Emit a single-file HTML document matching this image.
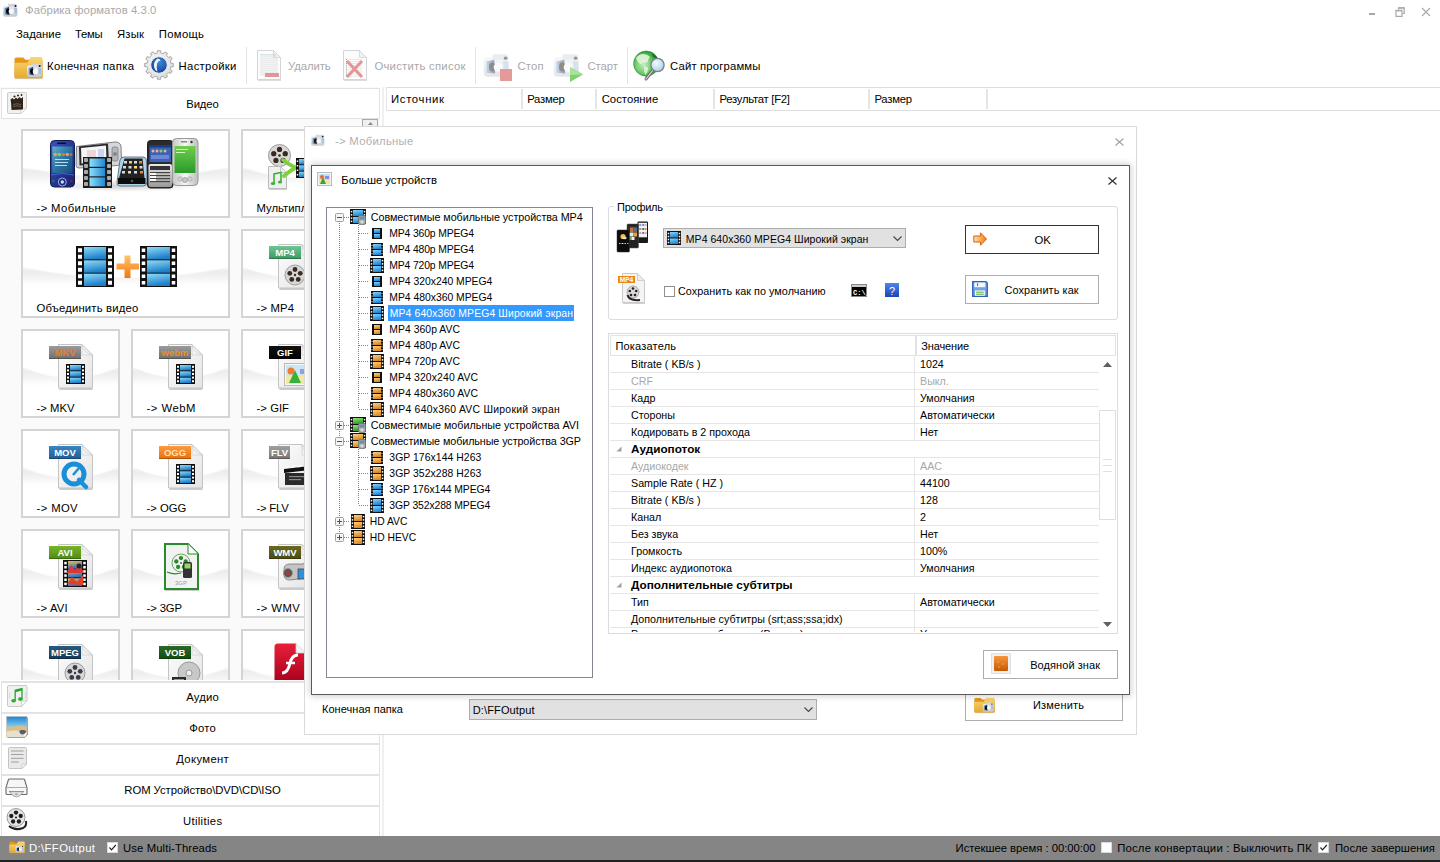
<!DOCTYPE html>
<html><head><meta charset="utf-8">
<style>
html,body{margin:0;padding:0;}
body{width:1440px;height:862px;overflow:hidden;position:relative;background:#fff;font-family:"Liberation Sans", sans-serif;}
.t{position:absolute;white-space:pre;line-height:1;}
.r{position:absolute;box-sizing:border-box;}
svg.r{overflow:visible;}
</style></head><body>
<svg class="r" style="left:2px;top:3px;" width="16" height="14" viewBox="0 0 16 14"><defs><linearGradient id="g1" x1="0" y1="0" x2="0" y2="1"><stop offset="0" stop-color="#eceef1"/><stop offset="1" stop-color="#c4c8ce"/></linearGradient><linearGradient id="g2" x1="0" y1="0" x2="1" y2="0"><stop offset="0" stop-color="#7fa6d8"/><stop offset="1" stop-color="#1c2a44"/></linearGradient></defs><g opacity="1" transform="scale(1.0,1.0)"><path d="M1 5 Q1 2.5 3.5 2.5 L13 2.5 Q15.5 2.5 15.5 5 L15.5 11.5 Q15.5 13.8 13 13.8 L3.5 13.8 Q1 13.8 1 11.5 Z" fill="url(#g1)"/><path d="M6 0.8 L13 0.8 Q15 0.8 15 2.5 L15 4 L6 4 Z" fill="#d4d6da"/><circle cx="13.5" cy="3" r="1" fill="#111"/><path d="M2.5 5 L7 4 L7.5 12 L2.5 11.5 Z" fill="url(#g2)"/><ellipse cx="5.8" cy="8.2" rx="1.8" ry="2.6" fill="#050505"/><circle cx="9.3" cy="8.3" r="2.6" fill="#f8f8f8"/><path d="M12 4.5 L15 5 L15 10.5 L12.5 10.5 Z" fill="#9dbbe0" opacity="0.9"/></g></svg><span class="t" style="left:25.00px;top:5px;font-size:11.3px;color:#a9a9a9;letter-spacing:0.076px;">Фабрика форматов 4.3.0</span><div class="r" style="left:1369px;top:13px;width:6px;height:2px;background:#a8a8a8;"></div><svg class="r" style="left:1395px;top:7px;" width="10" height="10" viewBox="0 0 10 10"><path d="M3.5 2.5 V0.8 H9.2 V6.5 H7.5" fill="none" stroke="#a8a8a8" stroke-width="1.2"/><rect x="1" y="3.4" width="6" height="6" fill="none" stroke="#a8a8a8" stroke-width="1.2"/><rect x="1" y="3" width="6" height="1.4" fill="#a8a8a8"/><rect x="3.5" y="0.3" width="6" height="1.4" fill="#a8a8a8"/></svg><svg class="r" style="left:1421px;top:7px;" width="10" height="10" viewBox="0 0 10 10"><path d="M1 1 L9 9 M9 1 L1 9" stroke="#a8a8a8" stroke-width="1.1"/></svg><span class="t" style="left:16.00px;top:29px;font-size:11.3px;color:#000;letter-spacing:0.031px;">Задание</span><span class="t" style="left:75.00px;top:29px;font-size:11.3px;color:#000;letter-spacing:-0.246px;">Темы</span><span class="t" style="left:117.00px;top:29px;font-size:11.3px;color:#000;letter-spacing:0.198px;">Язык</span><span class="t" style="left:158.75px;top:29px;font-size:11.3px;color:#000;letter-spacing:0.322px;">Помощь</span><svg class="r" style="left:14px;top:56px;" width="29" height="23" viewBox="0 0 29 23"><defs><linearGradient id="g3" x1="0" y1="0" x2="0" y2="1"><stop offset="0" stop-color="#f9d77a"/><stop offset="1" stop-color="#e7a928"/></linearGradient><linearGradient id="g4" x1="0" y1="0" x2="0" y2="1"><stop offset="0" stop-color="#e69a1a"/><stop offset="1" stop-color="#d78a10"/></linearGradient></defs><g transform="scale(1.0357142857142858,1.0454545454545454)"><path d="M0.5 3 Q0.5 1.5 2 1.5 L9 1.5 L11 3.5 L26 3.5 Q27.5 3.5 27.5 5 L27.5 20 Q27.5 21.5 26 21.5 L2 21.5 Q0.5 21.5 0.5 20 Z" fill="url(#g4)"/><path d="M0.5 8 Q0.5 6.5 2 6.5 L13 6.5 L16 1 L26 1 Q27.5 1 27.5 2.5 L27.5 20 Q27.5 21.5 26 21.5 L2 21.5 Q0.5 21.5 0.5 20 Z" fill="url(#g3)"/><rect x="1" y="21.2" width="27" height="1" fill="#c9c9c9" opacity="0.6"/></g></svg><svg class="r" style="left:25.6px;top:62.9px;" width="16.240000000000002" height="14.26" viewBox="0 0 16.240000000000002 14.26"><defs><linearGradient id="g5" x1="0" y1="0" x2="0" y2="1"><stop offset="0" stop-color="#eceef1"/><stop offset="1" stop-color="#c4c8ce"/></linearGradient><linearGradient id="g6" x1="0" y1="0" x2="1" y2="0"><stop offset="0" stop-color="#7fa6d8"/><stop offset="1" stop-color="#1c2a44"/></linearGradient></defs><g opacity="1" transform="scale(1.0150000000000001,1.0185714285714285)"><path d="M1 5 Q1 2.5 3.5 2.5 L13 2.5 Q15.5 2.5 15.5 5 L15.5 11.5 Q15.5 13.8 13 13.8 L3.5 13.8 Q1 13.8 1 11.5 Z" fill="url(#g5)"/><path d="M6 0.8 L13 0.8 Q15 0.8 15 2.5 L15 4 L6 4 Z" fill="#d4d6da"/><circle cx="13.5" cy="3" r="1" fill="#111"/><path d="M2.5 5 L7 4 L7.5 12 L2.5 11.5 Z" fill="url(#g6)"/><ellipse cx="5.8" cy="8.2" rx="1.8" ry="2.6" fill="#050505"/><circle cx="9.3" cy="8.3" r="2.6" fill="#f8f8f8"/><path d="M12 4.5 L15 5 L15 10.5 L12.5 10.5 Z" fill="#9dbbe0" opacity="0.9"/></g></svg><span class="t" style="left:47.00px;top:61px;font-size:11.3px;color:#000;letter-spacing:0.333px;">Конечная папка</span><svg class="r" style="left:144px;top:50px;" width="30" height="30" viewBox="0 0 30 30"><defs><radialGradient id="g7" cx="0.45" cy="0.4" r="0.65"><stop offset="0" stop-color="#ffffff"/><stop offset="1" stop-color="#d6d6d6"/></radialGradient><radialGradient id="g8" cx="0.55" cy="0.35" r="0.7"><stop offset="0" stop-color="#3f86d8"/><stop offset="1" stop-color="#0a3d98"/></radialGradient></defs><g transform="scale(1.0)"><path d="M26.59 11.89 L26.85 13.12 L29.32 13.49 L29.32 16.51 L26.85 16.88 L26.59 18.11 L26.20 19.30 L28.16 20.86 L26.65 23.46 L24.33 22.55 L23.49 23.49 L22.55 24.33 L23.46 26.65 L20.86 28.16 L19.30 26.20 L18.11 26.59 L16.88 26.85 L16.51 29.32 L13.49 29.32 L13.12 26.85 L11.89 26.59 L10.70 26.20 L9.14 28.16 L6.54 26.65 L7.45 24.33 L6.51 23.49 L5.67 22.55 L3.35 23.46 L1.84 20.86 L3.80 19.30 L3.41 18.11 L3.15 16.88 L0.68 16.51 L0.68 13.49 L3.15 13.12 L3.41 11.89 L3.80 10.70 L1.84 9.14 L3.35 6.54 L5.67 7.45 L6.51 6.51 L7.45 5.67 L6.54 3.35 L9.14 1.84 L10.70 3.80 L11.89 3.41 L13.12 3.15 L13.49 0.68 L16.51 0.68 L16.88 3.15 L18.11 3.41 L19.30 3.80 L20.86 1.84 L23.46 3.35 L22.55 5.67 L23.49 6.51 L24.33 7.45 L26.65 6.54 L28.16 9.14 L26.20 10.70 Z" fill="url(#g7)" stroke="#8c8c8c" stroke-width="0.7" stroke-linejoin="round"/><circle cx="15" cy="15" r="8.3" fill="url(#g8)" stroke="#f2ede6" stroke-width="1"/><path d="M13.2 8.8 Q9.2 12 10.2 17.5 Q11 20.6 13.4 21.8 Q12 17.2 13.2 13.2 Q14.2 10.8 16.6 10.6 Q16 8.4 13.2 8.8 Z" fill="#eef2f6"/></g></svg><span class="t" style="left:178.60px;top:61px;font-size:11.3px;color:#000;letter-spacing:0.299px;">Настройки</span><div class="r" style="left:246px;top:47px;width:1px;height:37px;background:#e3e3e3;"></div><svg class="r" style="left:257px;top:50px;" width="24" height="31" viewBox="0 0 24 31"><g opacity="0.75"><rect x="1" y="29.5" width="23" height="1.5" fill="#bdbdbd" opacity="0.7"/><path d="M0.5 0.5 L16.5 0.5 L23.5 7.5 L23.5 29.5 L0.5 29.5 Z" fill="#fbfbfb" stroke="#c8c8c8" stroke-width="1"/><path d="M16.5 0.5 L16.5 7.5 L23.5 7.5 Z" fill="#ececec" stroke="#c8c8c8" stroke-width="0.8"/></g><g opacity="0.8"><rect x="3" y="4.5" width="16" height="0.8" fill="#9cc3d6"/><rect x="3" y="6.5" width="16" height="0.8" fill="#d5d5d5"/><rect x="3" y="8.5" width="18" height="0.8" fill="#d5d5d5"/><rect x="3" y="10.5" width="18" height="0.8" fill="#d5d5d5"/><rect x="3" y="12.5" width="18" height="0.8" fill="#d5d5d5"/><rect x="3" y="14.5" width="18" height="0.8" fill="#d5d5d5"/><rect x="3" y="16.5" width="18" height="0.8" fill="#d5d5d5"/><rect x="3" y="18.5" width="18" height="0.8" fill="#d5d5d5"/><rect x="3" y="20.5" width="18" height="0.8" fill="#d5d5d5"/><rect x="3" y="22.5" width="18" height="0.8" fill="#d5d5d5"/><rect x="3" y="24.5" width="18" height="0.8" fill="#d5d5d5"/></g><rect x="8" y="23" width="14" height="4" fill="#e08d8d" opacity="0.9"/></svg><span class="t" style="left:288.00px;top:61px;font-size:11.3px;color:#a9a9a9;letter-spacing:-0.073px;">Удалить</span><svg class="r" style="left:343px;top:50px;" width="24" height="31" viewBox="0 0 24 31"><g opacity="0.75"><rect x="1" y="29.5" width="23" height="1.5" fill="#bdbdbd" opacity="0.7"/><path d="M0.5 0.5 L16.5 0.5 L23.5 7.5 L23.5 29.5 L0.5 29.5 Z" fill="#fbfbfb" stroke="#c8c8c8" stroke-width="1"/><path d="M16.5 0.5 L16.5 7.5 L23.5 7.5 Z" fill="#ececec" stroke="#c8c8c8" stroke-width="0.8"/></g><g opacity="0.6"><rect x="3" y="9.0" width="1" height="1" fill="#555"/><rect x="5" y="9.0" width="14" height="0.7" fill="#d0d0d0"/><rect x="3" y="11.1" width="1" height="1" fill="#555"/><rect x="5" y="11.1" width="14" height="0.7" fill="#d0d0d0"/><rect x="3" y="13.2" width="1" height="1" fill="#555"/><rect x="5" y="13.2" width="14" height="0.7" fill="#d0d0d0"/><rect x="3" y="15.3" width="1" height="1" fill="#555"/><rect x="5" y="15.3" width="14" height="0.7" fill="#d0d0d0"/><rect x="3" y="17.4" width="1" height="1" fill="#555"/><rect x="5" y="17.4" width="14" height="0.7" fill="#d0d0d0"/><rect x="3" y="19.5" width="1" height="1" fill="#555"/><rect x="5" y="19.5" width="14" height="0.7" fill="#d0d0d0"/><rect x="3" y="21.6" width="1" height="1" fill="#555"/><rect x="5" y="21.6" width="14" height="0.7" fill="#d0d0d0"/><rect x="3" y="23.7" width="1" height="1" fill="#555"/><rect x="5" y="23.7" width="14" height="0.7" fill="#d0d0d0"/><rect x="3" y="25.8" width="1" height="1" fill="#555"/><rect x="5" y="25.8" width="14" height="0.7" fill="#d0d0d0"/></g><path d="M4 11 L19 27 M19 11 L4 27" stroke="#e38b8b" stroke-width="3" opacity="0.9"/></svg><span class="t" style="left:374.40px;top:61px;font-size:11.3px;color:#a9a9a9;letter-spacing:0.264px;">Очистить список</span><div class="r" style="left:475px;top:47px;width:1px;height:37px;background:#e3e3e3;"></div><svg class="r" style="left:482px;top:53px;" width="28" height="24" viewBox="0 0 28 24"><defs><linearGradient id="g9" x1="0" y1="0" x2="0" y2="1"><stop offset="0" stop-color="#eceef1"/><stop offset="1" stop-color="#c4c8ce"/></linearGradient><linearGradient id="g10" x1="0" y1="0" x2="1" y2="0"><stop offset="0" stop-color="#7fa6d8"/><stop offset="1" stop-color="#1c2a44"/></linearGradient></defs><g opacity="0.45" transform="scale(1.75,1.7142857142857142)"><path d="M1 5 Q1 2.5 3.5 2.5 L13 2.5 Q15.5 2.5 15.5 5 L15.5 11.5 Q15.5 13.8 13 13.8 L3.5 13.8 Q1 13.8 1 11.5 Z" fill="url(#g9)"/><path d="M6 0.8 L13 0.8 Q15 0.8 15 2.5 L15 4 L6 4 Z" fill="#d4d6da"/><circle cx="13.5" cy="3" r="1" fill="#111"/><path d="M2.5 5 L7 4 L7.5 12 L2.5 11.5 Z" fill="url(#g10)"/><ellipse cx="5.8" cy="8.2" rx="1.8" ry="2.6" fill="#050505"/><circle cx="9.3" cy="8.3" r="2.6" fill="#f8f8f8"/><path d="M12 4.5 L15 5 L15 10.5 L12.5 10.5 Z" fill="#9dbbe0" opacity="0.9"/></g></svg><div class="r" style="left:500px;top:69px;width:12px;height:12px;background:#e59a9a;"></div><span class="t" style="left:517.50px;top:61px;font-size:11.3px;color:#a9a9a9;letter-spacing:0.130px;">Стоп</span><svg class="r" style="left:552px;top:53px;" width="28" height="24" viewBox="0 0 28 24"><defs><linearGradient id="g11" x1="0" y1="0" x2="0" y2="1"><stop offset="0" stop-color="#eceef1"/><stop offset="1" stop-color="#c4c8ce"/></linearGradient><linearGradient id="g12" x1="0" y1="0" x2="1" y2="0"><stop offset="0" stop-color="#7fa6d8"/><stop offset="1" stop-color="#1c2a44"/></linearGradient></defs><g opacity="0.45" transform="scale(1.75,1.7142857142857142)"><path d="M1 5 Q1 2.5 3.5 2.5 L13 2.5 Q15.5 2.5 15.5 5 L15.5 11.5 Q15.5 13.8 13 13.8 L3.5 13.8 Q1 13.8 1 11.5 Z" fill="url(#g11)"/><path d="M6 0.8 L13 0.8 Q15 0.8 15 2.5 L15 4 L6 4 Z" fill="#d4d6da"/><circle cx="13.5" cy="3" r="1" fill="#111"/><path d="M2.5 5 L7 4 L7.5 12 L2.5 11.5 Z" fill="url(#g12)"/><ellipse cx="5.8" cy="8.2" rx="1.8" ry="2.6" fill="#050505"/><circle cx="9.3" cy="8.3" r="2.6" fill="#f8f8f8"/><path d="M12 4.5 L15 5 L15 10.5 L12.5 10.5 Z" fill="#9dbbe0" opacity="0.9"/></g></svg><svg class="r" style="left:570px;top:67px;" width="13" height="15" viewBox="0 0 13 15"><path d="M0 0 L13 7.5 L0 15 Z" fill="#7fcf6f"/><path d="M0 0 L13 7.5 L0 8 Z" fill="#a9e29a"/></svg><span class="t" style="left:587.50px;top:61px;font-size:11.3px;color:#a9a9a9;letter-spacing:-0.076px;">Старт</span><div class="r" style="left:627px;top:47px;width:1px;height:37px;background:#e3e3e3;"></div><svg class="r" style="left:633px;top:50px;" width="32" height="31" viewBox="0 0 32 31"><defs><radialGradient id="g13" cx="0.4" cy="0.55" r="0.7"><stop offset="0" stop-color="#c9f0c4"/><stop offset="0.55" stop-color="#5cc25a"/><stop offset="1" stop-color="#0d7a1a"/></radialGradient><radialGradient id="g14" cx="0.4" cy="0.35" r="0.75"><stop offset="0" stop-color="#f2faff"/><stop offset="1" stop-color="#a4cde8"/></radialGradient></defs><circle cx="13.2" cy="13.6" r="12.6" fill="url(#g13)" stroke="#1f8a2a" stroke-width="0.6"/><path d="M3 8 Q6 3.5 11 4 Q15 4.5 17 7 Q15 9 14.5 12 Q12 13.5 10 12.5 Q8 15 6 13 Q4 11.5 3 8 Z" fill="#e6f7e2" opacity="0.85"/><path d="M11 16.5 Q14 16 15.5 18 Q15 22 12.5 25 Q10.5 22.5 11 19 Z" fill="#e6f7e2" opacity="0.8"/><path d="M19 3.5 Q22.5 5 24 8.5 Q21.5 8.5 19.5 6.5 Z" fill="#0a5a10" opacity="0.6"/><line x1="20.5" y1="19.5" x2="13" y2="29" stroke="#6a6a6a" stroke-width="3" stroke-linecap="round"/><line x1="20.5" y1="19.5" x2="13" y2="29" stroke="#d8d8d8" stroke-width="1.2" stroke-linecap="round"/><circle cx="24.5" cy="15" r="6.6" fill="url(#g14)" stroke="#7a7f84" stroke-width="1.3"/></svg><span class="t" style="left:670.00px;top:61px;font-size:11.3px;color:#000;letter-spacing:0.168px;">Сайт программы</span><div class="r" style="left:0px;top:87px;width:380px;height:749px;background:#fafafa;"></div><div class="r" style="left:1px;top:88px;width:379px;height:31px;background:#fff;border:1px solid #e2e2e2;border-right:1px solid #e2e2e2;"></div><svg class="r" style="left:7px;top:92px;" width="20" height="22" viewBox="0 0 20 22"><path d="M1.5 0.5 L18.5 0.5 Q19.5 0.5 19.5 1.5 L19.5 16 L14 21.5 L1.5 21.5 Q0.5 21.5 0.5 20.5 L0.5 1.5 Q0.5 0.5 1.5 0.5 Z" fill="#f2f0ee" stroke="#d2ccc6" stroke-width="1"/><path d="M19.5 16 L15 16 Q14 16 14 17 L14 21.5 Z" fill="#fdfdfd" stroke="#d2ccc6" stroke-width="0.8"/><path d="M4 10 L16 8.5 L16 17.5 L4.5 18 Z" fill="#2e241c"/><path d="M3.5 7.5 L5.5 6 L7 7.5 L9 5.5 L10.5 7 L12.5 5 L14 6.5 L16 5 L16 9 L4 10.5 Z" fill="#2e241c"/><circle cx="7.5" cy="4.5" r="1.1" fill="#2e241c"/><circle cx="11" cy="3.6" r="1" fill="#2e241c"/><circle cx="14.5" cy="3" r="0.9" fill="#2e241c"/><path d="M6 12.5 Q10 11 14 12.5 M6 14.5 Q10 13 14 14.5" stroke="#7a6d62" stroke-width="0.8" fill="none"/></svg><span class="t" style="left:-97.55px;width:600px;text-align:center;top:99px;font-size:11.3px;color:#000;letter-spacing:-0.104px;">Видео</span><div class="r" style="left:362px;top:119px;width:16px;height:8px;background:#f0f0f0;border:1px solid #a8a8a8;border-bottom:none;"></div><svg class="r" style="left:368px;top:122px;" width="5" height="3" viewBox="0 0 5 3"><path d="M0 3 L2.5 0 L5 3 Z" fill="#888"/></svg><div class="r" style="left:21px;top:129px;width:209px;height:89px;border:2px solid #d4d4d4;background:radial-gradient(80% 56% at 50% 0%, #fff 96%, rgba(255,255,255,0) 100%),linear-gradient(#fff 0%,#fff 41%,#ececec 47%,#f3f3f3 55%,#fcfcfc 61%,#fff 66%);"></div><div class="r" style="left:241px;top:129px;width:120px;height:89px;border:2px solid #d4d4d4;background:radial-gradient(80% 56% at 50% 0%, #fff 96%, rgba(255,255,255,0) 100%),linear-gradient(#fff 0%,#fff 41%,#ececec 47%,#f3f3f3 55%,#fcfcfc 61%,#fff 66%);"></div><div class="r" style="left:21px;top:229px;width:209px;height:89px;border:2px solid #d4d4d4;background:radial-gradient(80% 56% at 50% 0%, #fff 96%, rgba(255,255,255,0) 100%),linear-gradient(#fff 0%,#fff 41%,#ececec 47%,#f3f3f3 55%,#fcfcfc 61%,#fff 66%);"></div><div class="r" style="left:241px;top:229px;width:120px;height:89px;border:2px solid #d4d4d4;background:radial-gradient(80% 56% at 50% 0%, #fff 96%, rgba(255,255,255,0) 100%),linear-gradient(#fff 0%,#fff 41%,#ececec 47%,#f3f3f3 55%,#fcfcfc 61%,#fff 66%);"></div><div class="r" style="left:21px;top:329px;width:99px;height:89px;border:2px solid #d4d4d4;background:radial-gradient(80% 56% at 50% 0%, #fff 96%, rgba(255,255,255,0) 100%),linear-gradient(#fff 0%,#fff 41%,#ececec 47%,#f3f3f3 55%,#fcfcfc 61%,#fff 66%);"></div><div class="r" style="left:131px;top:329px;width:99px;height:89px;border:2px solid #d4d4d4;background:radial-gradient(80% 56% at 50% 0%, #fff 96%, rgba(255,255,255,0) 100%),linear-gradient(#fff 0%,#fff 41%,#ececec 47%,#f3f3f3 55%,#fcfcfc 61%,#fff 66%);"></div><div class="r" style="left:241px;top:329px;width:99px;height:89px;border:2px solid #d4d4d4;background:radial-gradient(80% 56% at 50% 0%, #fff 96%, rgba(255,255,255,0) 100%),linear-gradient(#fff 0%,#fff 41%,#ececec 47%,#f3f3f3 55%,#fcfcfc 61%,#fff 66%);"></div><div class="r" style="left:21px;top:429px;width:99px;height:89px;border:2px solid #d4d4d4;background:radial-gradient(80% 56% at 50% 0%, #fff 96%, rgba(255,255,255,0) 100%),linear-gradient(#fff 0%,#fff 41%,#ececec 47%,#f3f3f3 55%,#fcfcfc 61%,#fff 66%);"></div><div class="r" style="left:131px;top:429px;width:99px;height:89px;border:2px solid #d4d4d4;background:radial-gradient(80% 56% at 50% 0%, #fff 96%, rgba(255,255,255,0) 100%),linear-gradient(#fff 0%,#fff 41%,#ececec 47%,#f3f3f3 55%,#fcfcfc 61%,#fff 66%);"></div><div class="r" style="left:241px;top:429px;width:99px;height:89px;border:2px solid #d4d4d4;background:radial-gradient(80% 56% at 50% 0%, #fff 96%, rgba(255,255,255,0) 100%),linear-gradient(#fff 0%,#fff 41%,#ececec 47%,#f3f3f3 55%,#fcfcfc 61%,#fff 66%);"></div><div class="r" style="left:21px;top:529px;width:99px;height:89px;border:2px solid #d4d4d4;background:radial-gradient(80% 56% at 50% 0%, #fff 96%, rgba(255,255,255,0) 100%),linear-gradient(#fff 0%,#fff 41%,#ececec 47%,#f3f3f3 55%,#fcfcfc 61%,#fff 66%);"></div><div class="r" style="left:131px;top:529px;width:99px;height:89px;border:2px solid #d4d4d4;background:radial-gradient(80% 56% at 50% 0%, #fff 96%, rgba(255,255,255,0) 100%),linear-gradient(#fff 0%,#fff 41%,#ececec 47%,#f3f3f3 55%,#fcfcfc 61%,#fff 66%);"></div><div class="r" style="left:241px;top:529px;width:99px;height:89px;border:2px solid #d4d4d4;background:radial-gradient(80% 56% at 50% 0%, #fff 96%, rgba(255,255,255,0) 100%),linear-gradient(#fff 0%,#fff 41%,#ececec 47%,#f3f3f3 55%,#fcfcfc 61%,#fff 66%);"></div><div class="r" style="left:21px;top:629px;width:99px;height:89px;border:2px solid #d4d4d4;background:radial-gradient(80% 56% at 50% 0%, #fff 96%, rgba(255,255,255,0) 100%),linear-gradient(#fff 0%,#fff 41%,#ececec 47%,#f3f3f3 55%,#fcfcfc 61%,#fff 66%);"></div><div class="r" style="left:131px;top:629px;width:99px;height:89px;border:2px solid #d4d4d4;background:radial-gradient(80% 56% at 50% 0%, #fff 96%, rgba(255,255,255,0) 100%),linear-gradient(#fff 0%,#fff 41%,#ececec 47%,#f3f3f3 55%,#fcfcfc 61%,#fff 66%);"></div><div class="r" style="left:241px;top:629px;width:99px;height:89px;border:2px solid #d4d4d4;background:radial-gradient(80% 56% at 50% 0%, #fff 96%, rgba(255,255,255,0) 100%),linear-gradient(#fff 0%,#fff 41%,#ececec 47%,#f3f3f3 55%,#fcfcfc 61%,#fff 66%);"></div><div class="r" style="left:48px;top:180px;width:152px;height:12px;background:radial-gradient(ellipse at center, rgba(0,0,0,0.18), rgba(0,0,0,0) 70%);"></div><svg class="r" style="left:75px;top:141px;" width="47" height="28" viewBox="0 0 47 28"><path d="M1.5 5.5 L40 1 Q45 0.8 46 5 L46.5 20 Q46.5 24 42 24.5 L4 27 Q1 27.2 1 24 Z" fill="#d4d6da" stroke="#7d8086" stroke-width="1"/><path d="M4 5.5 L33 2.5 L34 22 L4.5 24.5 Z" fill="#2a2a2a"/><path d="M6 7 L31 4.5 L31.5 20.5 L6.5 22.5 Z" fill="#f4f5f8"/><rect x="12" y="9" width="9" height="9" fill="#e8c0c0" opacity="0.6"/><rect x="23" y="8" width="6" height="9" fill="#b8c8e8" opacity="0.7"/><rect x="37" y="6" width="6" height="14" rx="2" fill="#b4b7bc" stroke="#666" stroke-width="0.6"/><circle cx="40" cy="13" r="2" fill="#888"/></svg><svg class="r" style="left:50px;top:140px;" width="26" height="49" viewBox="0 0 26 49"><defs><linearGradient id="g15" x1="0" y1="0" x2="1" y2="1"><stop offset="0" stop-color="#3a50c0"/><stop offset="1" stop-color="#17206a"/></linearGradient><linearGradient id="g16" x1="0" y1="0" x2="1" y2="1"><stop offset="0" stop-color="#5fb0d0"/><stop offset="0.5" stop-color="#2a74a0"/><stop offset="1" stop-color="#1a4f80"/></linearGradient></defs><rect x="0.5" y="0.5" width="24" height="46.5" rx="4" fill="url(#g15)" stroke="#141a50" stroke-width="1"/><rect x="7" y="2.5" width="9" height="1.5" rx="0.7" fill="#0c1030"/><rect x="2.3" y="6.5" width="20.2" height="26.5" fill="url(#g16)"/><g><circle cx="5.3" cy="14.5" r="1.8" fill="#e0a070"/><circle cx="9.3" cy="14.5" r="1.8" fill="#7fd05a"/><circle cx="13.3" cy="14.5" r="1.8" fill="#c08060"/><circle cx="17.3" cy="14.5" r="1.8" fill="#d0a080"/><circle cx="21" cy="14.5" r="1.5" fill="#e06050"/></g><rect x="5" y="19" width="14" height="0.9" fill="#cfe8f2"/><rect x="5" y="22" width="13" height="0.9" fill="#cfe8f2"/><rect x="5" y="25" width="12" height="0.9" fill="#cfe8f2"/><path d="M1 35 Q12.5 32 24 35" stroke="#4a60d0" stroke-width="1" fill="none"/><circle cx="12.3" cy="42" r="4" fill="#1e2c7a" stroke="#9aacf0" stroke-width="1"/><circle cx="12.3" cy="42" r="1.7" fill="#d0d8ff"/><rect x="2.5" y="40" width="2" height="2" fill="#2a8a2a"/><rect x="20.5" y="40" width="2" height="2" fill="#a02020"/></svg><svg class="r" style="left:83px;top:157px;" width="29" height="31" viewBox="0 0 29 31"><rect x="0" y="0" width="29" height="31" fill="#1c1c1c"/><g fill="#a8a8a8"><rect x="1" y="1" width="4" height="4" rx="1"/><rect x="1" y="7" width="4" height="4" rx="1"/><rect x="1" y="13" width="4" height="4" rx="1"/><rect x="1" y="19" width="4" height="4" rx="1"/><rect x="1" y="25" width="4" height="4" rx="1"/><rect x="24" y="1" width="4" height="4" rx="1"/><rect x="24" y="7" width="4" height="4" rx="1"/><rect x="24" y="13" width="4" height="4" rx="1"/><rect x="24" y="19" width="4" height="4" rx="1"/><rect x="24" y="25" width="4" height="4" rx="1"/></g><defs><linearGradient id="fmob" x1="0" y1="0" x2="1" y2="0"><stop offset="0" stop-color="#8ee0fa"/><stop offset="1" stop-color="#2288d0"/></linearGradient></defs><rect x="6.5" y="1.5" width="15.5" height="8.3" fill="url(#fmob)"/><rect x="6.5" y="11" width="15.5" height="8.3" fill="url(#fmob)"/><rect x="6.5" y="20.5" width="15.5" height="8.8" fill="url(#fmob)"/></svg><svg class="r" style="left:116px;top:156px;" width="32" height="31" viewBox="0 0 32 31"><path d="M8 1 L27 1 Q30 1 30.5 4 L31 26 Q31 30 27 30 L4 30 Q0.5 30 1 26 L4 4 Q5 1 8 1 Z" fill="#a8d4ec" stroke="#556" stroke-width="0.8"/><path d="M8.5 2.5 L26.5 2.5 L28.5 22 L3 22 Z" fill="#222"/><g fill="#d9d9d9"><rect x="8" y="5" width="3" height="2.5"/><rect x="13" y="5" width="3" height="2.5" fill="#f5d06a"/><rect x="18" y="5" width="3" height="2.5"/><rect x="23" y="5" width="3" height="2.5" fill="#e8883a"/><rect x="7" y="10" width="3" height="2.5"/><rect x="12.5" y="10" width="3" height="2.5"/><rect x="18" y="10" width="3" height="2.5" fill="#f0e080"/><rect x="23.5" y="10" width="3" height="2.5"/><rect x="6" y="15" width="3" height="2.5"/><rect x="12" y="15" width="3" height="2.5"/><rect x="18" y="15" width="3" height="2.5"/><rect x="24" y="15" width="3" height="2.5" fill="#e8883a"/></g><rect x="2" y="22" width="27.5" height="6" fill="#0c0c0c"/><circle cx="16" cy="25" r="1.3" fill="#555"/></svg><svg class="r" style="left:147px;top:140px;" width="27" height="49" viewBox="0 0 27 49"><defs><linearGradient id="g17" x1="0" y1="0" x2="0" y2="1"><stop offset="0" stop-color="#e8e8e8"/><stop offset="1" stop-color="#9a9a9a"/></linearGradient></defs><rect x="0.5" y="0.5" width="25.5" height="47.5" rx="3" fill="#2a2a2a" stroke="#222" stroke-width="1"/><rect x="2.5" y="5" width="21.5" height="17" fill="#3b63b8"/><rect x="2.5" y="5" width="21.5" height="2.5" fill="#1d3b80"/><g fill="#f0b080"><circle cx="6" cy="11" r="1.5"/><circle cx="10" cy="11" r="1.5"/><circle cx="14" cy="11" r="1.5" fill="#80d060"/><circle cx="18" cy="11" r="1.5"/></g><rect x="4" y="15" width="18" height="4" fill="#6a8ad8"/><rect x="1.5" y="24" width="23.5" height="23" rx="2" fill="url(#g17)"/><rect x="3" y="26" width="20" height="4" fill="#333"/><g fill="#444"><rect x="3" y="32" width="20" height="1.2"/><rect x="3" y="35" width="20" height="1.2"/><rect x="3" y="38" width="20" height="1.2"/><rect x="3" y="41" width="20" height="1.2"/></g><g fill="#fafafa"><rect x="3" y="33" width="6" height="2"/><rect x="3" y="36" width="6" height="2"/><rect x="3" y="39" width="6" height="2"/></g></svg><svg class="r" style="left:172px;top:138px;" width="27" height="49" viewBox="0 0 27 49"><defs><linearGradient id="g18" x1="0" y1="0" x2="1" y2="0"><stop offset="0" stop-color="#c6c6c6"/><stop offset="0.5" stop-color="#f6f6f6"/><stop offset="1" stop-color="#bdbdbd"/></linearGradient><linearGradient id="g19" x1="0" y1="0" x2="0" y2="1"><stop offset="0" stop-color="#6ecf4a"/><stop offset="1" stop-color="#2a9a2a"/></linearGradient></defs><rect x="0.5" y="0.5" width="25.5" height="47" rx="4" fill="url(#g18)" stroke="#9a9a9a" stroke-width="1"/><rect x="9" y="3" width="6" height="1.5" fill="#888"/><circle cx="19.5" cy="4" r="1.2" fill="#333"/><rect x="2.5" y="8" width="21" height="27" fill="url(#g19)"/><rect x="4" y="11" width="12" height="1" fill="#d8f2c8"/><rect x="4" y="14" width="9" height="1" fill="#d8f2c8"/><circle cx="8" cy="41" r="2.2" fill="#d4d4d4" stroke="#999" stroke-width="0.6"/><circle cx="18" cy="41" r="2.2" fill="#d4d4d4" stroke="#999" stroke-width="0.6"/><circle cx="13" cy="42" r="2.5" fill="#c8c8c8" stroke="#888" stroke-width="0.6"/></svg><svg class="r" style="left:76px;top:246px;" width="38" height="41" viewBox="0 0 38 41"><defs><linearGradient id="g20" x1="0" y1="0" x2="0.3" y2="1"><stop offset="0" stop-color="#8fdcf8"/><stop offset="1" stop-color="#1d7fc9"/></linearGradient></defs><g opacity="1"><rect x="0" y="0" width="38" height="41" fill="#111"/><rect x="8" y="1.00" width="22" height="12.33" fill="url(#g20)"/><rect x="8" y="14.33" width="22" height="12.33" fill="url(#g20)"/><rect x="8" y="27.67" width="22" height="12.33" fill="url(#g20)"/><rect x="2.00" y="2.25" width="4.00" height="4.00" fill="#fff"/><rect x="32.00" y="2.25" width="4.00" height="4.00" fill="#fff"/><rect x="2.00" y="8.75" width="4.00" height="4.00" fill="#fff"/><rect x="32.00" y="8.75" width="4.00" height="4.00" fill="#fff"/><rect x="2.00" y="15.25" width="4.00" height="4.00" fill="#fff"/><rect x="32.00" y="15.25" width="4.00" height="4.00" fill="#fff"/><rect x="2.00" y="21.75" width="4.00" height="4.00" fill="#fff"/><rect x="32.00" y="21.75" width="4.00" height="4.00" fill="#fff"/><rect x="2.00" y="28.25" width="4.00" height="4.00" fill="#fff"/><rect x="32.00" y="28.25" width="4.00" height="4.00" fill="#fff"/><rect x="2.00" y="34.75" width="4.00" height="4.00" fill="#fff"/><rect x="32.00" y="34.75" width="4.00" height="4.00" fill="#fff"/></g></svg><svg class="r" style="left:140px;top:246px;" width="37" height="41" viewBox="0 0 37 41"><defs><linearGradient id="g21" x1="0" y1="0" x2="0.3" y2="1"><stop offset="0" stop-color="#8fdcf8"/><stop offset="1" stop-color="#1d7fc9"/></linearGradient></defs><g opacity="1"><rect x="0" y="0" width="37" height="41" fill="#111"/><rect x="7" y="1.00" width="23" height="12.33" fill="url(#g21)"/><rect x="7" y="14.33" width="23" height="12.33" fill="url(#g21)"/><rect x="7" y="27.67" width="23" height="12.33" fill="url(#g21)"/><rect x="1.75" y="2.50" width="3.50" height="3.50" fill="#fff"/><rect x="31.75" y="2.50" width="3.50" height="3.50" fill="#fff"/><rect x="1.75" y="9.00" width="3.50" height="3.50" fill="#fff"/><rect x="31.75" y="9.00" width="3.50" height="3.50" fill="#fff"/><rect x="1.75" y="15.50" width="3.50" height="3.50" fill="#fff"/><rect x="31.75" y="15.50" width="3.50" height="3.50" fill="#fff"/><rect x="1.75" y="22.00" width="3.50" height="3.50" fill="#fff"/><rect x="31.75" y="22.00" width="3.50" height="3.50" fill="#fff"/><rect x="1.75" y="28.50" width="3.50" height="3.50" fill="#fff"/><rect x="31.75" y="28.50" width="3.50" height="3.50" fill="#fff"/><rect x="1.75" y="35.00" width="3.50" height="3.50" fill="#fff"/><rect x="31.75" y="35.00" width="3.50" height="3.50" fill="#fff"/></g></svg><svg class="r" style="left:116px;top:255px;" width="24" height="24" viewBox="0 0 24 24"><defs><linearGradient id="g22" x1="0" y1="0" x2="0" y2="1"><stop offset="0" stop-color="#ffc56a"/><stop offset="1" stop-color="#f07810"/></linearGradient></defs><path d="M8.5 0.5 H14.5 V8.5 H23 V14.5 H14.5 V23 H8.5 V14.5 H0.5 V8.5 H8.5 Z" fill="url(#g22)"/></svg><svg class="r" style="left:268px;top:144px;" width="24" height="23" viewBox="0 0 24 23"><circle cx="11.5" cy="11.5" r="11" fill="#d8d8d8" stroke="#8f8f8f" stroke-width="0.88"/><circle cx="11.50" cy="5.45" r="2.64" fill="#3a2a20"/><circle cx="17.25" cy="9.63" r="2.64" fill="#3a2a20"/><circle cx="15.06" cy="16.39" r="2.64" fill="#3a2a20"/><circle cx="7.94" cy="16.39" r="2.64" fill="#3a2a20"/><circle cx="5.75" cy="9.63" r="2.64" fill="#3a2a20"/><circle cx="11.5" cy="11.5" r="1.32" fill="#3a2a20"/></svg><svg class="r" style="left:268px;top:166px;" width="19" height="24" viewBox="0 0 19 24"><g opacity="1"><rect x="1" y="22.5" width="18" height="1.5" fill="#bdbdbd" opacity="0.7"/><path d="M0.5 0.5 L12.5 0.5 L18.5 6.5 L18.5 22.5 L0.5 22.5 Z" fill="#f0f0f0" stroke="#bbb" stroke-width="1"/><path d="M12.5 0.5 L12.5 6.5 L18.5 6.5 Z" fill="#ececec" stroke="#bbb" stroke-width="0.8"/></g><path d="M6 17 L6 8 L13 6.5 L13 15" stroke="#3cb43c" stroke-width="1.6" fill="none"/><ellipse cx="5" cy="17.5" rx="2.2" ry="1.6" fill="#3cb43c"/><ellipse cx="12" cy="16" rx="2.2" ry="1.6" fill="#3cb43c"/></svg><svg class="r" style="left:282px;top:158px;" width="16" height="20" viewBox="0 0 16 20"><path d="M1 2 Q9 8 14 9.5 Q9 12 2 18" stroke="#7fd03a" stroke-width="4" fill="none" stroke-linecap="round"/></svg><svg class="r" style="left:296px;top:158px;" width="14" height="20" viewBox="0 0 14 20"><defs><linearGradient id="g23" x1="0" y1="0" x2="0.3" y2="1"><stop offset="0" stop-color="#8fdcf8"/><stop offset="1" stop-color="#1d7fc9"/></linearGradient></defs><g opacity="1"><rect x="0" y="0" width="14" height="20" fill="#111"/><rect x="3" y="1.00" width="8" height="5.33" fill="url(#g23)"/><rect x="3" y="7.33" width="8" height="5.33" fill="url(#g23)"/><rect x="3" y="13.67" width="8" height="5.33" fill="url(#g23)"/><rect x="0.75" y="2.50" width="1.50" height="1.50" fill="#fff"/><rect x="11.75" y="2.50" width="1.50" height="1.50" fill="#fff"/><rect x="0.75" y="7.00" width="1.50" height="1.50" fill="#fff"/><rect x="11.75" y="7.00" width="1.50" height="1.50" fill="#fff"/><rect x="0.75" y="11.50" width="1.50" height="1.50" fill="#fff"/><rect x="11.75" y="11.50" width="1.50" height="1.50" fill="#fff"/><rect x="0.75" y="16.00" width="1.50" height="1.50" fill="#fff"/><rect x="11.75" y="16.00" width="1.50" height="1.50" fill="#fff"/></g></svg><svg class="r" style="left:278px;top:244px;" width="35" height="46" viewBox="0 0 35 46"><defs><linearGradient id="g24" x1="0" y1="0" x2="1" y2="1"><stop offset="0" stop-color="#fdfdfd"/><stop offset="1" stop-color="#e4e4e4"/></linearGradient></defs><rect x="1.5" y="44" width="33" height="2" fill="#9a9a9a" opacity="0.5"/><path d="M0.5 0.5 L24 0.5 L34.5 11 L34.5 44 L0.5 44 Z" fill="url(#g24)" stroke="#c4c4c4" stroke-width="1"/><path d="M24 0.5 Q25 9 34.5 11 L24 11 Z" fill="#f4f4f4" stroke="#c9c9c9" stroke-width="0.6"/></svg><svg class="r" style="left:284px;top:264px;" width="22" height="22" viewBox="0 0 22 22"><circle cx="11" cy="11" r="10" fill="#d6d6d6" stroke="#8f8f8f" stroke-width="0.80"/><circle cx="11.00" cy="5.50" r="2.40" fill="#3a2a20"/><circle cx="16.23" cy="9.30" r="2.40" fill="#3a2a20"/><circle cx="14.23" cy="15.45" r="2.40" fill="#3a2a20"/><circle cx="7.77" cy="15.45" r="2.40" fill="#3a2a20"/><circle cx="5.77" cy="9.30" r="2.40" fill="#3a2a20"/><circle cx="11" cy="11" r="1.20" fill="#3a2a20"/></svg><svg class="r" style="left:269px;top:246px;" width="32" height="13" viewBox="0 0 32 13"><defs><linearGradient id="g25" x1="0" y1="0" x2="0" y2="1"><stop offset="0" stop-color="#6fc594"/><stop offset="1" stop-color="#3a9a64"/></linearGradient></defs><rect x="0" y="0" width="32" height="13" fill="url(#g25)"/><rect x="0" y="12" width="32" height="1" fill="#000" opacity="0.25"/><text x="16.0" y="10" font-family="Liberation Sans" font-weight="bold" font-size="9.5" fill="#fff" text-anchor="middle">MP4</text></svg><svg class="r" style="left:58px;top:344px;" width="35" height="46" viewBox="0 0 35 46"><defs><linearGradient id="g26" x1="0" y1="0" x2="1" y2="1"><stop offset="0" stop-color="#fdfdfd"/><stop offset="1" stop-color="#e4e4e4"/></linearGradient></defs><rect x="1.5" y="44" width="33" height="2" fill="#9a9a9a" opacity="0.5"/><path d="M0.5 0.5 L24 0.5 L34.5 11 L34.5 44 L0.5 44 Z" fill="url(#g26)" stroke="#c4c4c4" stroke-width="1"/><path d="M24 0.5 Q25 9 34.5 11 L24 11 Z" fill="#f4f4f4" stroke="#c9c9c9" stroke-width="0.6"/></svg><svg class="r" style="left:66px;top:364px;" width="19" height="20" viewBox="0 0 19 20"><defs><linearGradient id="g27" x1="0" y1="0" x2="0.3" y2="1"><stop offset="0" stop-color="#8fdcf8"/><stop offset="1" stop-color="#1d7fc9"/></linearGradient></defs><g opacity="1"><rect x="0" y="0" width="19" height="20" fill="#111"/><rect x="4" y="1.00" width="11" height="5.33" fill="url(#g27)"/><rect x="4" y="7.33" width="11" height="5.33" fill="url(#g27)"/><rect x="4" y="13.67" width="11" height="5.33" fill="url(#g27)"/><rect x="1.00" y="1.80" width="2.00" height="2.00" fill="#fff"/><rect x="16.00" y="1.80" width="2.00" height="2.00" fill="#fff"/><rect x="1.00" y="5.40" width="2.00" height="2.00" fill="#fff"/><rect x="16.00" y="5.40" width="2.00" height="2.00" fill="#fff"/><rect x="1.00" y="9.00" width="2.00" height="2.00" fill="#fff"/><rect x="16.00" y="9.00" width="2.00" height="2.00" fill="#fff"/><rect x="1.00" y="12.60" width="2.00" height="2.00" fill="#fff"/><rect x="16.00" y="12.60" width="2.00" height="2.00" fill="#fff"/><rect x="1.00" y="16.20" width="2.00" height="2.00" fill="#fff"/><rect x="16.00" y="16.20" width="2.00" height="2.00" fill="#fff"/></g></svg><svg class="r" style="left:49px;top:346px;" width="32" height="13" viewBox="0 0 32 13"><defs><linearGradient id="g28" x1="0" y1="0" x2="0" y2="1"><stop offset="0" stop-color="#9b9b9b"/><stop offset="1" stop-color="#6f6f6f"/></linearGradient></defs><rect x="0" y="0" width="32" height="13" fill="url(#g28)"/><rect x="0" y="12" width="32" height="1" fill="#000" opacity="0.25"/><text x="16.0" y="10" font-family="Liberation Sans" font-weight="bold" font-size="9.5" fill="#f07a1e" text-anchor="middle">MKV</text></svg><svg class="r" style="left:168px;top:344px;" width="35" height="46" viewBox="0 0 35 46"><defs><linearGradient id="g29" x1="0" y1="0" x2="1" y2="1"><stop offset="0" stop-color="#fdfdfd"/><stop offset="1" stop-color="#e4e4e4"/></linearGradient></defs><rect x="1.5" y="44" width="33" height="2" fill="#9a9a9a" opacity="0.5"/><path d="M0.5 0.5 L24 0.5 L34.5 11 L34.5 44 L0.5 44 Z" fill="url(#g29)" stroke="#c4c4c4" stroke-width="1"/><path d="M24 0.5 Q25 9 34.5 11 L24 11 Z" fill="#f4f4f4" stroke="#c9c9c9" stroke-width="0.6"/></svg><svg class="r" style="left:176px;top:364px;" width="19" height="20" viewBox="0 0 19 20"><defs><linearGradient id="g30" x1="0" y1="0" x2="0.3" y2="1"><stop offset="0" stop-color="#8fdcf8"/><stop offset="1" stop-color="#1d7fc9"/></linearGradient></defs><g opacity="1"><rect x="0" y="0" width="19" height="20" fill="#111"/><rect x="4" y="1.00" width="11" height="5.33" fill="url(#g30)"/><rect x="4" y="7.33" width="11" height="5.33" fill="url(#g30)"/><rect x="4" y="13.67" width="11" height="5.33" fill="url(#g30)"/><rect x="1.00" y="1.80" width="2.00" height="2.00" fill="#fff"/><rect x="16.00" y="1.80" width="2.00" height="2.00" fill="#fff"/><rect x="1.00" y="5.40" width="2.00" height="2.00" fill="#fff"/><rect x="16.00" y="5.40" width="2.00" height="2.00" fill="#fff"/><rect x="1.00" y="9.00" width="2.00" height="2.00" fill="#fff"/><rect x="16.00" y="9.00" width="2.00" height="2.00" fill="#fff"/><rect x="1.00" y="12.60" width="2.00" height="2.00" fill="#fff"/><rect x="16.00" y="12.60" width="2.00" height="2.00" fill="#fff"/><rect x="1.00" y="16.20" width="2.00" height="2.00" fill="#fff"/><rect x="16.00" y="16.20" width="2.00" height="2.00" fill="#fff"/></g></svg><svg class="r" style="left:159px;top:346px;" width="32" height="13" viewBox="0 0 32 13"><defs><linearGradient id="g31" x1="0" y1="0" x2="0" y2="1"><stop offset="0" stop-color="#9b9b9b"/><stop offset="1" stop-color="#6f6f6f"/></linearGradient></defs><rect x="0" y="0" width="32" height="13" fill="url(#g31)"/><rect x="0" y="12" width="32" height="1" fill="#000" opacity="0.25"/><text x="16.0" y="10" font-family="Liberation Sans" font-weight="bold" font-size="9.5" fill="#f0901e" text-anchor="middle">webm</text></svg><svg class="r" style="left:278px;top:344px;" width="35" height="46" viewBox="0 0 35 46"><defs><linearGradient id="g32" x1="0" y1="0" x2="1" y2="1"><stop offset="0" stop-color="#fdfdfd"/><stop offset="1" stop-color="#e4e4e4"/></linearGradient></defs><rect x="1.5" y="44" width="33" height="2" fill="#9a9a9a" opacity="0.5"/><path d="M0.5 0.5 L24 0.5 L34.5 11 L34.5 44 L0.5 44 Z" fill="url(#g32)" stroke="#c4c4c4" stroke-width="1"/><path d="M24 0.5 Q25 9 34.5 11 L24 11 Z" fill="#f4f4f4" stroke="#c9c9c9" stroke-width="0.6"/></svg><svg class="r" style="left:284px;top:363px;" width="26" height="26" viewBox="0 0 26 26"><rect x="0.5" y="0.5" width="25" height="22" fill="#f6f6f6" stroke="#bbb"/><rect x="2" y="2" width="22" height="19" fill="#c9e6f5"/><rect x="2" y="13" width="22" height="8" fill="#f2e8a0"/><path d="M5 20 L11 7 L17 20 Z" fill="#3ab03a"/><circle cx="7" cy="8" r="3.5" fill="#f07a2a"/><rect x="16" y="6" width="6" height="5" fill="#8a8ae0" opacity="0.8"/></svg><svg class="r" style="left:269px;top:346px;" width="32" height="13" viewBox="0 0 32 13"><defs><linearGradient id="g33" x1="0" y1="0" x2="0" y2="1"><stop offset="0" stop-color="#111"/><stop offset="1" stop-color="#000"/></linearGradient></defs><rect x="0" y="0" width="32" height="13" fill="url(#g33)"/><rect x="0" y="12" width="32" height="1" fill="#000" opacity="0.25"/><text x="16.0" y="10" font-family="Liberation Sans" font-weight="bold" font-size="9.5" fill="#fff" text-anchor="middle">GIF</text></svg><svg class="r" style="left:58px;top:444px;" width="35" height="46" viewBox="0 0 35 46"><defs><linearGradient id="g34" x1="0" y1="0" x2="1" y2="1"><stop offset="0" stop-color="#fdfdfd"/><stop offset="1" stop-color="#e4e4e4"/></linearGradient></defs><rect x="1.5" y="44" width="33" height="2" fill="#9a9a9a" opacity="0.5"/><path d="M0.5 0.5 L24 0.5 L34.5 11 L34.5 44 L0.5 44 Z" fill="url(#g34)" stroke="#c4c4c4" stroke-width="1"/><path d="M24 0.5 Q25 9 34.5 11 L24 11 Z" fill="#f4f4f4" stroke="#c9c9c9" stroke-width="0.6"/></svg><svg class="r" style="left:59px;top:459px;" width="32" height="30" viewBox="0 0 32 30"><circle cx="15" cy="15" r="10" fill="none" stroke="#1a8fd8" stroke-width="5"/><path d="M20 21 L27 28" stroke="#1a8fd8" stroke-width="4.5" stroke-linecap="round"/><path d="M14 16 L20 9" stroke="#1a8fd8" stroke-width="2.5"/></svg><svg class="r" style="left:49px;top:446px;" width="32" height="13" viewBox="0 0 32 13"><defs><linearGradient id="g35" x1="0" y1="0" x2="0" y2="1"><stop offset="0" stop-color="#3a86c0"/><stop offset="1" stop-color="#1f5f96"/></linearGradient></defs><rect x="0" y="0" width="32" height="13" fill="url(#g35)"/><rect x="0" y="12" width="32" height="1" fill="#000" opacity="0.25"/><text x="16.0" y="10" font-family="Liberation Sans" font-weight="bold" font-size="9.5" fill="#fff" text-anchor="middle">MOV</text></svg><svg class="r" style="left:168px;top:444px;" width="35" height="46" viewBox="0 0 35 46"><defs><linearGradient id="g36" x1="0" y1="0" x2="1" y2="1"><stop offset="0" stop-color="#fdfdfd"/><stop offset="1" stop-color="#e4e4e4"/></linearGradient></defs><rect x="1.5" y="44" width="33" height="2" fill="#9a9a9a" opacity="0.5"/><path d="M0.5 0.5 L24 0.5 L34.5 11 L34.5 44 L0.5 44 Z" fill="url(#g36)" stroke="#c4c4c4" stroke-width="1"/><path d="M24 0.5 Q25 9 34.5 11 L24 11 Z" fill="#f4f4f4" stroke="#c9c9c9" stroke-width="0.6"/></svg><svg class="r" style="left:176px;top:464px;" width="19" height="20" viewBox="0 0 19 20"><defs><linearGradient id="g37" x1="0" y1="0" x2="0.3" y2="1"><stop offset="0" stop-color="#8fdcf8"/><stop offset="1" stop-color="#1d7fc9"/></linearGradient></defs><g opacity="1"><rect x="0" y="0" width="19" height="20" fill="#111"/><rect x="4" y="1.00" width="11" height="5.33" fill="url(#g37)"/><rect x="4" y="7.33" width="11" height="5.33" fill="url(#g37)"/><rect x="4" y="13.67" width="11" height="5.33" fill="url(#g37)"/><rect x="1.00" y="1.80" width="2.00" height="2.00" fill="#fff"/><rect x="16.00" y="1.80" width="2.00" height="2.00" fill="#fff"/><rect x="1.00" y="5.40" width="2.00" height="2.00" fill="#fff"/><rect x="16.00" y="5.40" width="2.00" height="2.00" fill="#fff"/><rect x="1.00" y="9.00" width="2.00" height="2.00" fill="#fff"/><rect x="16.00" y="9.00" width="2.00" height="2.00" fill="#fff"/><rect x="1.00" y="12.60" width="2.00" height="2.00" fill="#fff"/><rect x="16.00" y="12.60" width="2.00" height="2.00" fill="#fff"/><rect x="1.00" y="16.20" width="2.00" height="2.00" fill="#fff"/><rect x="16.00" y="16.20" width="2.00" height="2.00" fill="#fff"/></g></svg><svg class="r" style="left:159px;top:446px;" width="32" height="13" viewBox="0 0 32 13"><defs><linearGradient id="g38" x1="0" y1="0" x2="0" y2="1"><stop offset="0" stop-color="#ff9a3a"/><stop offset="1" stop-color="#e8700e"/></linearGradient></defs><rect x="0" y="0" width="32" height="13" fill="url(#g38)"/><rect x="0" y="12" width="32" height="1" fill="#000" opacity="0.25"/><text x="16.0" y="10" font-family="Liberation Sans" font-weight="bold" font-size="9.5" fill="#fde0c0" text-anchor="middle">OGG</text></svg><svg class="r" style="left:278px;top:444px;" width="35" height="46" viewBox="0 0 35 46"><defs><linearGradient id="g39" x1="0" y1="0" x2="1" y2="1"><stop offset="0" stop-color="#fdfdfd"/><stop offset="1" stop-color="#e4e4e4"/></linearGradient></defs><rect x="1.5" y="44" width="33" height="2" fill="#9a9a9a" opacity="0.5"/><path d="M0.5 0.5 L24 0.5 L34.5 11 L34.5 44 L0.5 44 Z" fill="url(#g39)" stroke="#c4c4c4" stroke-width="1"/><path d="M24 0.5 Q25 9 34.5 11 L24 11 Z" fill="#f4f4f4" stroke="#c9c9c9" stroke-width="0.6"/></svg><svg class="r" style="left:283px;top:462px;" width="28" height="24" viewBox="0 0 28 24"><path d="M1 7 L27 4 L27 8 L1 11 Z" fill="#111"/><path d="M3 6 L6 4 M9 5.5 L12 3.5 M15 5 L18 3 M21 4.5 L24 2.5" stroke="#fff" stroke-width="1.5"/><rect x="2" y="11" width="25" height="12" fill="#2a2a2a"/><rect x="6" y="14" width="15" height="1.2" fill="#888"/><rect x="6" y="17" width="12" height="1.2" fill="#888"/></svg><svg class="r" style="left:269px;top:446px;" width="21" height="13" viewBox="0 0 21 13"><defs><linearGradient id="g40" x1="0" y1="0" x2="0" y2="1"><stop offset="0" stop-color="#a0a0a0"/><stop offset="1" stop-color="#767676"/></linearGradient></defs><rect x="0" y="0" width="21" height="13" fill="url(#g40)"/><rect x="0" y="12" width="21" height="1" fill="#000" opacity="0.25"/><text x="10.5" y="10" font-family="Liberation Sans" font-weight="bold" font-size="9.5" fill="#fff" text-anchor="middle">FLV</text></svg><svg class="r" style="left:58px;top:544px;" width="35" height="46" viewBox="0 0 35 46"><defs><linearGradient id="g41" x1="0" y1="0" x2="1" y2="1"><stop offset="0" stop-color="#fdfdfd"/><stop offset="1" stop-color="#e4e4e4"/></linearGradient></defs><rect x="1.5" y="44" width="33" height="2" fill="#9a9a9a" opacity="0.5"/><path d="M0.5 0.5 L24 0.5 L34.5 11 L34.5 44 L0.5 44 Z" fill="url(#g41)" stroke="#c4c4c4" stroke-width="1"/><path d="M24 0.5 Q25 9 34.5 11 L24 11 Z" fill="#f4f4f4" stroke="#c9c9c9" stroke-width="0.6"/></svg><svg class="r" style="left:63px;top:560px;" width="24" height="27" viewBox="0 0 24 27"><defs><linearGradient id="g42" x1="0" y1="0" x2="0.3" y2="1"><stop offset="0" stop-color="#f0c04a"/><stop offset="1" stop-color="#2a6fd0"/></linearGradient></defs><g opacity="1"><rect x="0" y="0" width="24" height="27" fill="#111"/><rect x="5" y="1.00" width="14" height="7.67" fill="url(#g42)"/><rect x="5" y="9.67" width="14" height="7.67" fill="url(#g42)"/><rect x="5" y="18.33" width="14" height="7.67" fill="url(#g42)"/><rect x="1.25" y="1.83" width="2.50" height="2.50" fill="#fff"/><rect x="20.25" y="1.83" width="2.50" height="2.50" fill="#fff"/><rect x="1.25" y="6.00" width="2.50" height="2.50" fill="#fff"/><rect x="20.25" y="6.00" width="2.50" height="2.50" fill="#fff"/><rect x="1.25" y="10.17" width="2.50" height="2.50" fill="#fff"/><rect x="20.25" y="10.17" width="2.50" height="2.50" fill="#fff"/><rect x="1.25" y="14.33" width="2.50" height="2.50" fill="#fff"/><rect x="20.25" y="14.33" width="2.50" height="2.50" fill="#fff"/><rect x="1.25" y="18.50" width="2.50" height="2.50" fill="#fff"/><rect x="20.25" y="18.50" width="2.50" height="2.50" fill="#fff"/><rect x="1.25" y="22.67" width="2.50" height="2.50" fill="#fff"/><rect x="20.25" y="22.67" width="2.50" height="2.50" fill="#fff"/></g></svg><svg class="r" style="left:67px;top:562px;" width="16" height="23" viewBox="0 0 16 23"><path d="M0 10 L4 3 L8 8 L12 2 L16 9 L16 11 L0 11 Z" fill="#d83a3a"/><circle cx="12" cy="4" r="2.5" fill="#222"/><path d="M0 22 L5 15 L10 20 L16 13 L16 23 Z" fill="#e0402a"/></svg><svg class="r" style="left:49px;top:546px;" width="32" height="13" viewBox="0 0 32 13"><defs><linearGradient id="g43" x1="0" y1="0" x2="0" y2="1"><stop offset="0" stop-color="#79b42c"/><stop offset="1" stop-color="#4f8a14"/></linearGradient></defs><rect x="0" y="0" width="32" height="13" fill="url(#g43)"/><rect x="0" y="12" width="32" height="1" fill="#000" opacity="0.25"/><text x="16.0" y="10" font-family="Liberation Sans" font-weight="bold" font-size="9.5" fill="#fff" text-anchor="middle">AVI</text></svg><svg class="r" style="left:164px;top:543px;" width="36" height="48" viewBox="0 0 36 48"><rect x="1" y="46" width="34" height="2" fill="#999" opacity="0.5"/><path d="M1 1 L24 1 L34 11 L34 46 L1 46 Z" fill="#f2f2f2" stroke="#2a8a2a" stroke-width="2"/><path d="M24 1 L24 11 L34 11" fill="#fff" stroke="#2a8a2a" stroke-width="1"/><circle cx="17" cy="20" r="9" fill="#f0f0f0" stroke="#2a8a2a" stroke-width="0.72"/><circle cx="17.00" cy="15.05" r="2.16" fill="#2a8a2a"/><circle cx="21.71" cy="18.47" r="2.16" fill="#2a8a2a"/><circle cx="19.91" cy="24.00" r="2.16" fill="#2a8a2a"/><circle cx="14.09" cy="24.00" r="2.16" fill="#2a8a2a"/><circle cx="12.29" cy="18.47" r="2.16" fill="#2a8a2a"/><circle cx="17" cy="20" r="1.08" fill="#2a8a2a"/><rect x="19" y="19" width="9" height="16" rx="1.5" fill="#333"/><rect x="20.5" y="20.5" width="6" height="5" fill="#9bd36a"/><path d="M3 29 Q10 32 17 30" stroke="#2a8a2a" stroke-width="1.2" fill="none"/><text x="17" y="42" font-family="Liberation Sans" font-size="6" fill="#999" text-anchor="middle">3GP</text></svg><svg class="r" style="left:278px;top:544px;" width="35" height="46" viewBox="0 0 35 46"><defs><linearGradient id="g44" x1="0" y1="0" x2="1" y2="1"><stop offset="0" stop-color="#fdfdfd"/><stop offset="1" stop-color="#e4e4e4"/></linearGradient></defs><rect x="1.5" y="44" width="33" height="2" fill="#9a9a9a" opacity="0.5"/><path d="M0.5 0.5 L24 0.5 L34.5 11 L34.5 44 L0.5 44 Z" fill="url(#g44)" stroke="#c4c4c4" stroke-width="1"/><path d="M24 0.5 Q25 9 34.5 11 L24 11 Z" fill="#f4f4f4" stroke="#c9c9c9" stroke-width="0.6"/></svg><svg class="r" style="left:281px;top:561px;" width="30" height="22" viewBox="0 0 30 22"><path d="M3 8 Q3 3 9 3 L22 3 L24 1 L26 3 L26 17 L9 19 Q3 19 3 14 Z" fill="#c4c4c4" stroke="#777" stroke-width="0.8"/><circle cx="7" cy="12" r="4.5" fill="#555" stroke="#999"/><circle cx="7" cy="12" r="2" fill="#c03030"/><rect x="17" y="8" width="12" height="10" fill="#2f8fd8" stroke="#444" stroke-width="0.8"/></svg><svg class="r" style="left:269px;top:546px;" width="32" height="13" viewBox="0 0 32 13"><defs><linearGradient id="g45" x1="0" y1="0" x2="0" y2="1"><stop offset="0" stop-color="#6a6a22"/><stop offset="1" stop-color="#4a4a10"/></linearGradient></defs><rect x="0" y="0" width="32" height="13" fill="url(#g45)"/><rect x="0" y="12" width="32" height="1" fill="#000" opacity="0.25"/><text x="16.0" y="10" font-family="Liberation Sans" font-weight="bold" font-size="9.5" fill="#fff" text-anchor="middle">WMV</text></svg><svg class="r" style="left:58px;top:644px;" width="35" height="46" viewBox="0 0 35 46"><defs><linearGradient id="g46" x1="0" y1="0" x2="1" y2="1"><stop offset="0" stop-color="#fdfdfd"/><stop offset="1" stop-color="#e4e4e4"/></linearGradient></defs><rect x="1.5" y="44" width="33" height="2" fill="#9a9a9a" opacity="0.5"/><path d="M0.5 0.5 L24 0.5 L34.5 11 L34.5 44 L0.5 44 Z" fill="url(#g46)" stroke="#c4c4c4" stroke-width="1"/><path d="M24 0.5 Q25 9 34.5 11 L24 11 Z" fill="#f4f4f4" stroke="#c9c9c9" stroke-width="0.6"/></svg><svg class="r" style="left:64px;top:662px;" width="22" height="22" viewBox="0 0 22 22"><circle cx="11" cy="11" r="10" fill="#d8d8d8" stroke="#888" stroke-width="0.80"/><circle cx="11.00" cy="5.50" r="2.40" fill="#3a3a4a"/><circle cx="16.23" cy="9.30" r="2.40" fill="#3a3a4a"/><circle cx="14.23" cy="15.45" r="2.40" fill="#3a3a4a"/><circle cx="7.77" cy="15.45" r="2.40" fill="#3a3a4a"/><circle cx="5.77" cy="9.30" r="2.40" fill="#3a3a4a"/><circle cx="11" cy="11" r="1.20" fill="#3a3a4a"/></svg><svg class="r" style="left:49px;top:646px;" width="32" height="13" viewBox="0 0 32 13"><defs><linearGradient id="g47" x1="0" y1="0" x2="0" y2="1"><stop offset="0" stop-color="#2a5a80"/><stop offset="1" stop-color="#163a58"/></linearGradient></defs><rect x="0" y="0" width="32" height="13" fill="url(#g47)"/><rect x="0" y="12" width="32" height="1" fill="#000" opacity="0.25"/><text x="16.0" y="10" font-family="Liberation Sans" font-weight="bold" font-size="9.5" fill="#fff" text-anchor="middle">MPEG</text></svg><svg class="r" style="left:168px;top:644px;" width="35" height="46" viewBox="0 0 35 46"><defs><linearGradient id="g48" x1="0" y1="0" x2="1" y2="1"><stop offset="0" stop-color="#fdfdfd"/><stop offset="1" stop-color="#e4e4e4"/></linearGradient></defs><rect x="1.5" y="44" width="33" height="2" fill="#9a9a9a" opacity="0.5"/><path d="M0.5 0.5 L24 0.5 L34.5 11 L34.5 44 L0.5 44 Z" fill="url(#g48)" stroke="#c4c4c4" stroke-width="1"/><path d="M24 0.5 Q25 9 34.5 11 L24 11 Z" fill="#f4f4f4" stroke="#c9c9c9" stroke-width="0.6"/></svg><svg class="r" style="left:171px;top:659px;" width="30" height="30" viewBox="0 0 30 30"><circle cx="18" cy="14" r="11" fill="#c8c8c8" stroke="#999"/><circle cx="18" cy="14" r="3" fill="#eee" stroke="#999"/><rect x="1" y="18" width="14" height="10" fill="#2a2a2a"/><rect x="3" y="20" width="10" height="6" fill="#e08a3a"/></svg><svg class="r" style="left:159px;top:646px;" width="32" height="13" viewBox="0 0 32 13"><defs><linearGradient id="g49" x1="0" y1="0" x2="0" y2="1"><stop offset="0" stop-color="#2a6a2a"/><stop offset="1" stop-color="#134a13"/></linearGradient></defs><rect x="0" y="0" width="32" height="13" fill="url(#g49)"/><rect x="0" y="12" width="32" height="1" fill="#000" opacity="0.25"/><text x="16.0" y="10" font-family="Liberation Sans" font-weight="bold" font-size="9.5" fill="#fff" text-anchor="middle">VOB</text></svg><svg class="r" style="left:274px;top:643px;" width="32" height="40" viewBox="0 0 32 40"><defs><linearGradient id="g50" x1="0" y1="0" x2="0" y2="1"><stop offset="0" stop-color="#e8203a"/><stop offset="1" stop-color="#a8001c"/></linearGradient></defs><path d="M0.5 4 Q0.5 0.5 4 0.5 L22 0.5 L31.5 10 L31.5 40 L0.5 40 Z" fill="url(#g50)"/><path d="M22 0.5 L22 10 L31.5 10" fill="#f4f4f4" stroke="#ccc" stroke-width="0.8"/><path d="M8 30 Q14 30 16 20 Q18 12 24 12" stroke="#fff" stroke-width="3" fill="none"/><path d="M12 20 L21 20" stroke="#fff" stroke-width="2.5"/></svg><span class="t" style="left:36.50px;top:203px;font-size:11.3px;color:#000;letter-spacing:0.371px;">-&gt; Мобильные</span><span class="t" style="left:256.50px;top:203px;font-size:11.3px;color:#000;">Мультиплекс</span><span class="t" style="left:36.50px;top:303px;font-size:11.3px;color:#000;letter-spacing:0.173px;">Объединить видео</span><span class="t" style="left:256.50px;top:303px;font-size:11.3px;color:#000;letter-spacing:0.153px;">-&gt; MP4</span><span class="t" style="left:36.60px;top:403px;font-size:11.3px;color:#000;letter-spacing:0.003px;">-&gt; MKV</span><span class="t" style="left:146.60px;top:403px;font-size:11.3px;color:#000;letter-spacing:0.460px;">-&gt; WebM</span><span class="t" style="left:256.60px;top:403px;font-size:11.3px;color:#000;letter-spacing:0.014px;">-&gt; GIF</span><span class="t" style="left:36.60px;top:503px;font-size:11.3px;color:#000;letter-spacing:0.353px;">-&gt; MOV</span><span class="t" style="left:146.60px;top:503px;font-size:11.3px;color:#000;letter-spacing:-0.012px;">-&gt; OGG</span><span class="t" style="left:256.60px;top:503px;font-size:11.3px;color:#000;letter-spacing:-0.258px;">-&gt; FLV</span><span class="t" style="left:36.60px;top:603px;font-size:11.3px;color:#000;letter-spacing:0.150px;">-&gt; AVI</span><span class="t" style="left:146.60px;top:603px;font-size:11.3px;color:#000;letter-spacing:-0.142px;">-&gt; 3GP</span><span class="t" style="left:256.60px;top:603px;font-size:11.3px;color:#000;letter-spacing:0.418px;">-&gt; WMV</span><div class="r" style="left:0px;top:680px;width:380px;height:156px;background:#fff;"></div><div class="r" style="left:1px;top:681px;width:379px;height:31px;border-top:2px solid #e3e3e3;border-left:1px solid #e3e3e3;border-right:1px solid #e3e3e3;background:#fff;"></div><span class="t" style="left:-97.42px;width:600px;text-align:center;top:692px;font-size:11.3px;color:#000;letter-spacing:0.156px;">Аудио</span><div class="r" style="left:1px;top:712px;width:379px;height:31px;border-top:2px solid #e3e3e3;border-left:1px solid #e3e3e3;border-right:1px solid #e3e3e3;background:#fff;"></div><span class="t" style="left:-97.39px;width:600px;text-align:center;top:723px;font-size:11.3px;color:#000;letter-spacing:0.216px;">Фото</span><div class="r" style="left:1px;top:743px;width:379px;height:31px;border-top:2px solid #e3e3e3;border-left:1px solid #e3e3e3;border-right:1px solid #e3e3e3;background:#fff;"></div><span class="t" style="left:-97.32px;width:600px;text-align:center;top:754px;font-size:11.3px;color:#000;letter-spacing:0.354px;">Документ</span><div class="r" style="left:1px;top:774px;width:379px;height:31px;border-top:2px solid #e3e3e3;border-left:1px solid #e3e3e3;border-right:1px solid #e3e3e3;background:#fff;"></div><span class="t" style="left:-97.53px;width:600px;text-align:center;top:785px;font-size:11.3px;color:#000;letter-spacing:-0.052px;">ROM Устройство\DVD\CD\ISO</span><div class="r" style="left:1px;top:805px;width:379px;height:31px;border-top:2px solid #e3e3e3;border-left:1px solid #e3e3e3;border-right:1px solid #e3e3e3;background:#fff;"></div><span class="t" style="left:-97.33px;width:600px;text-align:center;top:816px;font-size:11.3px;color:#000;letter-spacing:0.349px;">Utilities</span><svg class="r" style="left:7px;top:685px;" width="21" height="22" viewBox="0 0 21 22"><path d="M1.5 0.5 L19 0.5 Q20 0.5 20 1.5 L20 16 L14.5 21.5 L1.5 21.5 Q0.5 21.5 0.5 20.5 L0.5 1.5 Q0.5 0.5 1.5 0.5 Z" fill="#f1f1f1" stroke="#c8c8c8" stroke-width="1"/><path d="M20 16 L15.5 16 Q14.5 16 14.5 17 L14.5 21.5 Z" fill="#fdfdfd" stroke="#c8c8c8" stroke-width="0.8"/><path d="M8.2 15.5 L8.2 5.2 L15 3.5 L15 13.8" stroke="#22a82a" stroke-width="1.3" fill="none"/><path d="M8.2 5.2 L15 3.5 L15 5.5 L8.2 7.2 Z" fill="#22a82a"/><ellipse cx="6.6" cy="15.8" rx="2.4" ry="1.8" fill="#26b02e"/><ellipse cx="13.4" cy="14.1" rx="2.4" ry="1.8" fill="#26b02e"/><path d="M3 7.5 Q1.8 10.5 3 13.5 M18 7.5 Q19.2 10.5 18 13.5" stroke="#cfcfcf" stroke-width="0.8" fill="none"/></svg><svg class="r" style="left:6px;top:716px;" width="23" height="23" viewBox="0 0 23 23"><defs><linearGradient id="g51" x1="0" y1="0" x2="0" y2="1"><stop offset="0" stop-color="#1a86d6"/><stop offset="0.6" stop-color="#9ad8f0"/><stop offset="1" stop-color="#e8f6fa"/></linearGradient></defs><path d="M1.5 1.5 L22 1.5 L22 18.5 L18.5 22 L1.5 22 Z" fill="#444" opacity="0.55"/><path d="M0.5 0.5 L21 0.5 L21 18 L18 21 L0.5 21 Z" fill="url(#g51)" stroke="#c8c0b8" stroke-width="0.6"/><path d="M0.5 12 Q4 9.5 8 10.5 Q13 8.5 21 11 L21 18 L18 21 L0.5 21 Z" fill="#d8be8a"/><path d="M0.5 15.5 Q9 13.5 21 16 L21 18 L18 21 L0.5 21 Z" fill="#e6e0d0"/><path d="M13 15 Q17 13 20.5 15.5 Q18 19.5 14.5 18 Z" fill="#2a3050" opacity="0.75"/><path d="M21 18 L18.5 18 Q18 18 18 18.5 L18 21 Z" fill="#fafafa"/></svg><svg class="r" style="left:8px;top:747px;" width="19" height="22" viewBox="0 0 19 22"><path d="M1.5 0.5 L17.5 0.5 Q18.5 0.5 18.5 1.5 L18.5 17 L14 21.5 L1.5 21.5 Q0.5 21.5 0.5 20.5 L0.5 1.5 Q0.5 0.5 1.5 0.5 Z" fill="#e9e9e9" stroke="#c4c4c4" stroke-width="1"/><path d="M18.5 17 L15 17 Q14 17 14 18 L14 21.5 Z" fill="#fbfbfb" stroke="#c4c4c4" stroke-width="0.8"/><g fill="#a0a0a0"><rect x="3" y="3.5" width="12.5" height="1"/><rect x="3" y="7" width="12.5" height="1"/><rect x="3" y="10.8" width="12.5" height="1"/><rect x="3" y="14.5" width="7.5" height="1"/></g></svg><svg class="r" style="left:5px;top:778px;" width="23" height="22" viewBox="0 0 23 22"><path d="M4.5 1 L18.5 1 Q19.3 1 19.6 1.8 L22 9.5 L22 15.5 Q22 16.5 21 16.5 L2 16.5 Q1 16.5 1 15.5 L1 9.5 L3.4 1.8 Q3.7 1 4.5 1 Z" fill="#f6f6f6" stroke="#6a6a6a" stroke-width="1.1"/><path d="M2 9.5 L21 9.5" stroke="#9a9a9a" stroke-width="0.8"/><path d="M4 13.5 L19 13.5" stroke="#777" stroke-width="1"/><path d="M4.5 13.6 Q11.5 24.5 18.5 13.6 Z" fill="#e2e2e2" stroke="#8a8a8a" stroke-width="0.7"/><ellipse cx="11.5" cy="16.2" rx="1.6" ry="1" fill="#aaa"/></svg><svg class="r" style="left:6px;top:808px;" width="23" height="23" viewBox="0 0 23 23"><circle cx="10" cy="9.5" r="9" fill="#e4e4e4" stroke="#777" stroke-width="0.72"/><circle cx="10.00" cy="4.55" r="2.16" fill="#1e1e1e"/><circle cx="14.71" cy="7.97" r="2.16" fill="#1e1e1e"/><circle cx="12.91" cy="13.50" r="2.16" fill="#1e1e1e"/><circle cx="7.09" cy="13.50" r="2.16" fill="#1e1e1e"/><circle cx="5.29" cy="7.97" r="2.16" fill="#1e1e1e"/><circle cx="10" cy="9.5" r="1.08" fill="#1e1e1e"/><path d="M3 18 Q9 23 17 20 Q21 18 20 13" stroke="#222" stroke-width="2" fill="none"/></svg><div class="r" style="left:382px;top:87px;width:2px;height:749px;background:#f0f0f0;"></div><div class="r" style="left:386px;top:87px;width:1054px;height:24px;border-top:1px solid #dedede;border-bottom:1px solid #dedede;border-left:1px solid #e5e5e5;"></div><div class="r" style="left:521px;top:89px;width:2px;height:20px;background:#e5e5e5;"></div><div class="r" style="left:595px;top:89px;width:2px;height:20px;background:#e5e5e5;"></div><div class="r" style="left:713px;top:89px;width:2px;height:20px;background:#e5e5e5;"></div><div class="r" style="left:868px;top:89px;width:2px;height:20px;background:#e5e5e5;"></div><div class="r" style="left:986px;top:89px;width:2px;height:20px;background:#e5e5e5;"></div><span class="t" style="left:391.00px;top:94px;font-size:11.3px;color:#000;letter-spacing:0.681px;">Источник</span><span class="t" style="left:527.20px;top:94px;font-size:11.3px;color:#000;letter-spacing:-0.226px;">Размер</span><span class="t" style="left:601.70px;top:94px;font-size:11.3px;color:#000;letter-spacing:0.016px;">Состояние</span><span class="t" style="left:719.40px;top:94px;font-size:11.3px;color:#000;letter-spacing:-0.260px;">Результат [F2]</span><span class="t" style="left:874.40px;top:94px;font-size:11.3px;color:#000;letter-spacing:-0.226px;">Размер</span><div class="r" style="left:0px;top:836px;width:1440px;height:24px;background:#858585;"></div><div class="r" style="left:0px;top:860px;width:1440px;height:2px;background:#202222;"></div><svg class="r" style="left:9px;top:841px;" width="16" height="12" viewBox="0 0 16 12"><defs><linearGradient id="g52" x1="0" y1="0" x2="0" y2="1"><stop offset="0" stop-color="#f9d77a"/><stop offset="1" stop-color="#e7a928"/></linearGradient><linearGradient id="g53" x1="0" y1="0" x2="0" y2="1"><stop offset="0" stop-color="#e69a1a"/><stop offset="1" stop-color="#d78a10"/></linearGradient></defs><g transform="scale(0.5714285714285714,0.5454545454545454)"><path d="M0.5 3 Q0.5 1.5 2 1.5 L9 1.5 L11 3.5 L26 3.5 Q27.5 3.5 27.5 5 L27.5 20 Q27.5 21.5 26 21.5 L2 21.5 Q0.5 21.5 0.5 20 Z" fill="url(#g53)"/><path d="M0.5 8 Q0.5 6.5 2 6.5 L13 6.5 L16 1 L26 1 Q27.5 1 27.5 2.5 L27.5 20 Q27.5 21.5 26 21.5 L2 21.5 Q0.5 21.5 0.5 20 Z" fill="url(#g52)"/><rect x="1" y="21.2" width="27" height="1" fill="#c9c9c9" opacity="0.6"/></g></svg><svg class="r" style="left:15.4px;top:844.6px;" width="8.96" height="7.4399999999999995" viewBox="0 0 8.96 7.4399999999999995"><defs><linearGradient id="g54" x1="0" y1="0" x2="0" y2="1"><stop offset="0" stop-color="#eceef1"/><stop offset="1" stop-color="#c4c8ce"/></linearGradient><linearGradient id="g55" x1="0" y1="0" x2="1" y2="0"><stop offset="0" stop-color="#7fa6d8"/><stop offset="1" stop-color="#1c2a44"/></linearGradient></defs><g opacity="1" transform="scale(0.56,0.5314285714285714)"><path d="M1 5 Q1 2.5 3.5 2.5 L13 2.5 Q15.5 2.5 15.5 5 L15.5 11.5 Q15.5 13.8 13 13.8 L3.5 13.8 Q1 13.8 1 11.5 Z" fill="url(#g54)"/><path d="M6 0.8 L13 0.8 Q15 0.8 15 2.5 L15 4 L6 4 Z" fill="#d4d6da"/><circle cx="13.5" cy="3" r="1" fill="#111"/><path d="M2.5 5 L7 4 L7.5 12 L2.5 11.5 Z" fill="url(#g55)"/><ellipse cx="5.8" cy="8.2" rx="1.8" ry="2.6" fill="#050505"/><circle cx="9.3" cy="8.3" r="2.6" fill="#f8f8f8"/><path d="M12 4.5 L15 5 L15 10.5 L12.5 10.5 Z" fill="#9dbbe0" opacity="0.9"/></g></svg><span class="t" style="left:29.00px;top:843px;font-size:11.3px;color:#fff;letter-spacing:0.384px;">D:\FFOutput</span><div class="r" style="left:107px;top:842px;width:11px;height:11px;background:#fff;border:1px solid #d8d8d8;"></div><svg class="r" style="left:107px;top:842px;" width="11" height="11" viewBox="0 0 11 11"><path d="M2.5 5.5 L4.5 7.8 L8.8 3" fill="none" stroke="#222" stroke-width="1.2"/></svg><span class="t" style="left:123.00px;top:843px;font-size:11.3px;color:#000;letter-spacing:0.106px;">Use Multi-Threads</span><span class="t" style="left:955.60px;top:843px;font-size:11.3px;color:#000;letter-spacing:-0.032px;">Истекшее время : 00:00:00</span><div class="r" style="left:1101px;top:842px;width:11px;height:11px;background:#fff;border:1px solid #d8d8d8;"></div><span class="t" style="left:1117.20px;top:843px;font-size:11.3px;color:#000;letter-spacing:0.202px;">После конвертации : Выключить ПК</span><div class="r" style="left:1318px;top:842px;width:11px;height:11px;background:#fff;border:1px solid #d8d8d8;"></div><svg class="r" style="left:1318px;top:842px;" width="11" height="11" viewBox="0 0 11 11"><path d="M2.5 5.5 L4.5 7.8 L8.8 3" fill="none" stroke="#222" stroke-width="1.2"/></svg><span class="t" style="left:1335.00px;top:843px;font-size:11.3px;color:#000;letter-spacing:-0.012px;">После завершения</span><div class="r" style="left:304px;top:126px;width:833px;height:609px;background:#fff;border:1px solid #dadada;"></div><svg class="r" style="left:310px;top:134px;" width="15" height="12" viewBox="0 0 15 12"><defs><linearGradient id="g56" x1="0" y1="0" x2="0" y2="1"><stop offset="0" stop-color="#eceef1"/><stop offset="1" stop-color="#c4c8ce"/></linearGradient><linearGradient id="g57" x1="0" y1="0" x2="1" y2="0"><stop offset="0" stop-color="#7fa6d8"/><stop offset="1" stop-color="#1c2a44"/></linearGradient></defs><g opacity="0.9" transform="scale(0.9375,0.8571428571428571)"><path d="M1 5 Q1 2.5 3.5 2.5 L13 2.5 Q15.5 2.5 15.5 5 L15.5 11.5 Q15.5 13.8 13 13.8 L3.5 13.8 Q1 13.8 1 11.5 Z" fill="url(#g56)"/><path d="M6 0.8 L13 0.8 Q15 0.8 15 2.5 L15 4 L6 4 Z" fill="#d4d6da"/><circle cx="13.5" cy="3" r="1" fill="#111"/><path d="M2.5 5 L7 4 L7.5 12 L2.5 11.5 Z" fill="url(#g57)"/><ellipse cx="5.8" cy="8.2" rx="1.8" ry="2.6" fill="#050505"/><circle cx="9.3" cy="8.3" r="2.6" fill="#f8f8f8"/><path d="M12 4.5 L15 5 L15 10.5 L12.5 10.5 Z" fill="#9dbbe0" opacity="0.9"/></g></svg><span class="t" style="left:335.00px;top:136px;font-size:11.3px;color:#b0b0b0;letter-spacing:0.280px;">-&gt; Мобильные</span><svg class="r" style="left:1115px;top:138px;" width="9" height="8" viewBox="0 0 9 8"><path d="M0.5 0.5 L8.5 7.5 M8.5 0.5 L0.5 7.5" stroke="#a0a0a0" stroke-width="1.1"/></svg><span class="t" style="left:322.00px;top:704px;font-size:11px;color:#000;letter-spacing:0.038px;">Конечная папка</span><div class="r" style="left:469px;top:699px;width:348px;height:21px;background:#e1e1e1;border:1px solid #adadad;"></div><span class="t" style="left:472.80px;top:705px;font-size:11px;color:#000;letter-spacing:0.127px;">D:\FFOutput</span><svg class="r" style="left:804px;top:707px;" width="9" height="6" viewBox="0 0 9 6"><path d="M0.5 0.5 L4.5 4.5 L8.5 0.5" fill="none" stroke="#444" stroke-width="1.1"/></svg><div class="r" style="left:965px;top:690px;width:158px;height:31px;background:#fff;border:1px solid #adadad;"></div><svg class="r" style="left:974px;top:697px;" width="21" height="16" viewBox="0 0 21 16"><defs><linearGradient id="g58" x1="0" y1="0" x2="0" y2="1"><stop offset="0" stop-color="#f9d77a"/><stop offset="1" stop-color="#e7a928"/></linearGradient><linearGradient id="g59" x1="0" y1="0" x2="0" y2="1"><stop offset="0" stop-color="#e69a1a"/><stop offset="1" stop-color="#d78a10"/></linearGradient></defs><g transform="scale(0.75,0.7272727272727273)"><path d="M0.5 3 Q0.5 1.5 2 1.5 L9 1.5 L11 3.5 L26 3.5 Q27.5 3.5 27.5 5 L27.5 20 Q27.5 21.5 26 21.5 L2 21.5 Q0.5 21.5 0.5 20 Z" fill="url(#g59)"/><path d="M0.5 8 Q0.5 6.5 2 6.5 L13 6.5 L16 1 L26 1 Q27.5 1 27.5 2.5 L27.5 20 Q27.5 21.5 26 21.5 L2 21.5 Q0.5 21.5 0.5 20 Z" fill="url(#g58)"/><rect x="1" y="21.2" width="27" height="1" fill="#c9c9c9" opacity="0.6"/></g></svg><svg class="r" style="left:982.4px;top:701.8px;" width="11.760000000000002" height="9.92" viewBox="0 0 11.760000000000002 9.92"><defs><linearGradient id="g60" x1="0" y1="0" x2="0" y2="1"><stop offset="0" stop-color="#eceef1"/><stop offset="1" stop-color="#c4c8ce"/></linearGradient><linearGradient id="g61" x1="0" y1="0" x2="1" y2="0"><stop offset="0" stop-color="#7fa6d8"/><stop offset="1" stop-color="#1c2a44"/></linearGradient></defs><g opacity="1" transform="scale(0.7350000000000001,0.7085714285714285)"><path d="M1 5 Q1 2.5 3.5 2.5 L13 2.5 Q15.5 2.5 15.5 5 L15.5 11.5 Q15.5 13.8 13 13.8 L3.5 13.8 Q1 13.8 1 11.5 Z" fill="url(#g60)"/><path d="M6 0.8 L13 0.8 Q15 0.8 15 2.5 L15 4 L6 4 Z" fill="#d4d6da"/><circle cx="13.5" cy="3" r="1" fill="#111"/><path d="M2.5 5 L7 4 L7.5 12 L2.5 11.5 Z" fill="url(#g61)"/><ellipse cx="5.8" cy="8.2" rx="1.8" ry="2.6" fill="#050505"/><circle cx="9.3" cy="8.3" r="2.6" fill="#f8f8f8"/><path d="M12 4.5 L15 5 L15 10.5 L12.5 10.5 Z" fill="#9dbbe0" opacity="0.9"/></g></svg><span class="t" style="left:1033.00px;top:700px;font-size:11px;color:#000;letter-spacing:0.196px;">Изменить</span><div class="r" style="left:311px;top:165px;width:819px;height:530px;background:#fff;border:1px solid #5a5a5a;box-shadow:0 0 7px 1px rgba(0,0,0,0.2);"></div><svg class="r" style="left:317px;top:172px;" width="15" height="14" viewBox="0 0 15 14"><rect x="0.5" y="0.5" width="14" height="13" fill="#f4f4f4" stroke="#bbb"/><rect x="2" y="2" width="11" height="10" fill="#bfe3f5"/><rect x="2" y="8" width="11" height="4" fill="#efe7a0"/><path d="M3 12 L6 5 L9 12 Z" fill="#3aa53a"/><circle cx="5" cy="5" r="2" fill="#e86a2a"/><rect x="8" y="4" width="4" height="3" fill="#8a8ae0"/></svg><span class="t" style="left:341.30px;top:175px;font-size:11.3px;color:#000;letter-spacing:-0.051px;">Больше устройств</span><svg class="r" style="left:1108px;top:177px;" width="9" height="8" viewBox="0 0 9 8"><path d="M0.5 0.5 L8.5 7.5 M8.5 0.5 L0.5 7.5" stroke="#333" stroke-width="1.2"/></svg><div class="r" style="left:326px;top:207px;width:267px;height:471px;background:#fff;border:1px solid #828790;"></div><div class="r" style="left:339px;top:223px;width:1px;height:314px;background:repeating-linear-gradient(180deg,#808080 0 1px,transparent 1px 2px);"></div><div class="r" style="left:358px;top:225px;width:1px;height:184px;background:repeating-linear-gradient(180deg,#808080 0 1px,transparent 1px 2px);"></div><div class="r" style="left:358px;top:449px;width:1px;height:56px;background:repeating-linear-gradient(180deg,#808080 0 1px,transparent 1px 2px);"></div><svg class="r" style="left:335px;top:213px;" width="9" height="9" viewBox="0 0 9 9"><rect x="0.5" y="0.5" width="8" height="8" rx="1" fill="#f4f4f4" stroke="#a0a0a0" stroke-width="1"/><rect x="2" y="4" width="5" height="1" fill="#2c4fa8"/></svg><div class="r" style="left:344px;top:217px;width:6px;height:1px;background:repeating-linear-gradient(90deg,#808080 0 1px,transparent 1px 2px);"></div><svg class="r" style="left:350px;top:209px;" width="16" height="15" viewBox="0 0 16 15"><defs><linearGradient id="g62" x1="0" y1="0" x2="0.3" y2="1"><stop offset="0" stop-color="#88d8f8"/><stop offset="1" stop-color="#1f87d8"/></linearGradient></defs><g opacity="1"><rect x="0" y="0" width="16" height="15" fill="#111"/><rect x="3" y="1.00" width="10" height="6.00" fill="url(#g62)"/><rect x="3" y="8.00" width="10" height="6.00" fill="url(#g62)"/><rect x="0.75" y="1.88" width="1.50" height="1.50" fill="#fff"/><rect x="13.75" y="1.88" width="1.50" height="1.50" fill="#fff"/><rect x="0.75" y="5.12" width="1.50" height="1.50" fill="#fff"/><rect x="13.75" y="5.12" width="1.50" height="1.50" fill="#fff"/><rect x="0.75" y="8.38" width="1.50" height="1.50" fill="#fff"/><rect x="13.75" y="8.38" width="1.50" height="1.50" fill="#fff"/><rect x="0.75" y="11.62" width="1.50" height="1.50" fill="#fff"/><rect x="13.75" y="11.62" width="1.50" height="1.50" fill="#fff"/></g></svg><svg class="r" style="left:358px;top:215px;" width="8" height="10" viewBox="0 0 8 10"><rect x="0.5" y="0.5" width="7" height="9" rx="1.5" fill="#a8a8a8" stroke="#6a7a6a" stroke-width="0.8"/><rect x="1.5" y="1.5" width="5" height="3" fill="#6a8fb0"/><circle cx="4" cy="6.8" r="1.6" fill="#ddd"/></svg><span class="t" style="left:370.80px;top:212px;font-size:10.75px;color:#000;letter-spacing:-0.048px;">Совместимые мобильные устройства MP4</span><div class="r" style="left:359px;top:233px;width:10px;height:1px;background:repeating-linear-gradient(90deg,#808080 0 1px,transparent 1px 2px);"></div><svg class="r" style="left:372px;top:228px;" width="10" height="11" viewBox="0 0 10 11"><defs><linearGradient id="g63" x1="0" y1="0" x2="0.3" y2="1"><stop offset="0" stop-color="#88d8f8"/><stop offset="1" stop-color="#1f87d8"/></linearGradient></defs><g opacity="1"><rect x="0" y="0" width="10" height="11" fill="#111"/><rect x="2" y="1.00" width="6" height="4.00" fill="url(#g63)"/><rect x="2" y="6.00" width="6" height="4.00" fill="url(#g63)"/></g></svg><span class="t" style="left:389.30px;top:229px;font-size:10.4px;color:#000;letter-spacing:-0.149px;">MP4 360p MPEG4</span><div class="r" style="left:359px;top:249px;width:10px;height:1px;background:repeating-linear-gradient(90deg,#808080 0 1px,transparent 1px 2px);"></div><svg class="r" style="left:371px;top:243px;" width="12" height="13" viewBox="0 0 12 13"><defs><linearGradient id="g64" x1="0" y1="0" x2="0.3" y2="1"><stop offset="0" stop-color="#88d8f8"/><stop offset="1" stop-color="#1f87d8"/></linearGradient></defs><g opacity="1"><rect x="0" y="0" width="12" height="13" fill="#111"/><rect x="2" y="1.00" width="8" height="5.00" fill="url(#g64)"/><rect x="2" y="7.00" width="8" height="5.00" fill="url(#g64)"/><rect x="0.50" y="1.88" width="1.00" height="1.00" fill="#fff"/><rect x="10.50" y="1.88" width="1.00" height="1.00" fill="#fff"/><rect x="0.50" y="4.62" width="1.00" height="1.00" fill="#fff"/><rect x="10.50" y="4.62" width="1.00" height="1.00" fill="#fff"/><rect x="0.50" y="7.38" width="1.00" height="1.00" fill="#fff"/><rect x="10.50" y="7.38" width="1.00" height="1.00" fill="#fff"/><rect x="0.50" y="10.12" width="1.00" height="1.00" fill="#fff"/><rect x="10.50" y="10.12" width="1.00" height="1.00" fill="#fff"/></g></svg><span class="t" style="left:389.30px;top:245px;font-size:10.4px;color:#000;letter-spacing:-0.149px;">MP4 480p MPEG4</span><div class="r" style="left:359px;top:265px;width:10px;height:1px;background:repeating-linear-gradient(90deg,#808080 0 1px,transparent 1px 2px);"></div><svg class="r" style="left:370px;top:258px;" width="14" height="15" viewBox="0 0 14 15"><defs><linearGradient id="g65" x1="0" y1="0" x2="0.3" y2="1"><stop offset="0" stop-color="#88d8f8"/><stop offset="1" stop-color="#1f87d8"/></linearGradient></defs><g opacity="1"><rect x="0" y="0" width="14" height="15" fill="#111"/><rect x="3" y="1.00" width="8" height="6.00" fill="url(#g65)"/><rect x="3" y="8.00" width="8" height="6.00" fill="url(#g65)"/><rect x="0.75" y="1.88" width="1.50" height="1.50" fill="#fff"/><rect x="11.75" y="1.88" width="1.50" height="1.50" fill="#fff"/><rect x="0.75" y="5.12" width="1.50" height="1.50" fill="#fff"/><rect x="11.75" y="5.12" width="1.50" height="1.50" fill="#fff"/><rect x="0.75" y="8.38" width="1.50" height="1.50" fill="#fff"/><rect x="11.75" y="8.38" width="1.50" height="1.50" fill="#fff"/><rect x="0.75" y="11.62" width="1.50" height="1.50" fill="#fff"/><rect x="11.75" y="11.62" width="1.50" height="1.50" fill="#fff"/></g></svg><span class="t" style="left:389.30px;top:261px;font-size:10.4px;color:#000;letter-spacing:-0.149px;">MP4 720p MPEG4</span><div class="r" style="left:359px;top:281px;width:10px;height:1px;background:repeating-linear-gradient(90deg,#808080 0 1px,transparent 1px 2px);"></div><svg class="r" style="left:372px;top:276px;" width="10" height="11" viewBox="0 0 10 11"><defs><linearGradient id="g66" x1="0" y1="0" x2="0.3" y2="1"><stop offset="0" stop-color="#88d8f8"/><stop offset="1" stop-color="#1f87d8"/></linearGradient></defs><g opacity="1"><rect x="0" y="0" width="10" height="11" fill="#111"/><rect x="2" y="1.00" width="6" height="4.00" fill="url(#g66)"/><rect x="2" y="6.00" width="6" height="4.00" fill="url(#g66)"/></g></svg><span class="t" style="left:389.30px;top:277px;font-size:10.4px;color:#000;letter-spacing:-0.024px;">MP4 320x240 MPEG4</span><div class="r" style="left:359px;top:297px;width:10px;height:1px;background:repeating-linear-gradient(90deg,#808080 0 1px,transparent 1px 2px);"></div><svg class="r" style="left:371px;top:291px;" width="12" height="13" viewBox="0 0 12 13"><defs><linearGradient id="g67" x1="0" y1="0" x2="0.3" y2="1"><stop offset="0" stop-color="#88d8f8"/><stop offset="1" stop-color="#1f87d8"/></linearGradient></defs><g opacity="1"><rect x="0" y="0" width="12" height="13" fill="#111"/><rect x="2" y="1.00" width="8" height="5.00" fill="url(#g67)"/><rect x="2" y="7.00" width="8" height="5.00" fill="url(#g67)"/><rect x="0.50" y="1.88" width="1.00" height="1.00" fill="#fff"/><rect x="10.50" y="1.88" width="1.00" height="1.00" fill="#fff"/><rect x="0.50" y="4.62" width="1.00" height="1.00" fill="#fff"/><rect x="10.50" y="4.62" width="1.00" height="1.00" fill="#fff"/><rect x="0.50" y="7.38" width="1.00" height="1.00" fill="#fff"/><rect x="10.50" y="7.38" width="1.00" height="1.00" fill="#fff"/><rect x="0.50" y="10.12" width="1.00" height="1.00" fill="#fff"/><rect x="10.50" y="10.12" width="1.00" height="1.00" fill="#fff"/></g></svg><span class="t" style="left:389.30px;top:293px;font-size:10.4px;color:#000;letter-spacing:-0.024px;">MP4 480x360 MPEG4</span><div class="r" style="left:359px;top:313px;width:10px;height:1px;background:repeating-linear-gradient(90deg,#808080 0 1px,transparent 1px 2px);"></div><svg class="r" style="left:370px;top:306px;" width="14" height="15" viewBox="0 0 14 15"><defs><linearGradient id="g68" x1="0" y1="0" x2="0.3" y2="1"><stop offset="0" stop-color="#88d8f8"/><stop offset="1" stop-color="#1f87d8"/></linearGradient></defs><g opacity="1"><rect x="0" y="0" width="14" height="15" fill="#111"/><rect x="3" y="1.00" width="8" height="6.00" fill="url(#g68)"/><rect x="3" y="8.00" width="8" height="6.00" fill="url(#g68)"/><rect x="0.75" y="1.88" width="1.50" height="1.50" fill="#fff"/><rect x="11.75" y="1.88" width="1.50" height="1.50" fill="#fff"/><rect x="0.75" y="5.12" width="1.50" height="1.50" fill="#fff"/><rect x="11.75" y="5.12" width="1.50" height="1.50" fill="#fff"/><rect x="0.75" y="8.38" width="1.50" height="1.50" fill="#fff"/><rect x="11.75" y="8.38" width="1.50" height="1.50" fill="#fff"/><rect x="0.75" y="11.62" width="1.50" height="1.50" fill="#fff"/><rect x="11.75" y="11.62" width="1.50" height="1.50" fill="#fff"/></g></svg><div class="r" style="left:388px;top:305px;width:186px;height:16px;background:#3399ff;"></div><span class="t" style="left:389.70px;top:309px;font-size:10.4px;color:#fff;letter-spacing:0.132px;">MP4 640x360 MPEG4 Широкий экран</span><div class="r" style="left:359px;top:329px;width:10px;height:1px;background:repeating-linear-gradient(90deg,#808080 0 1px,transparent 1px 2px);"></div><svg class="r" style="left:372px;top:324px;" width="10" height="11" viewBox="0 0 10 11"><defs><linearGradient id="g69" x1="0" y1="0" x2="0.3" y2="1"><stop offset="0" stop-color="#ffd08a"/><stop offset="1" stop-color="#d9891c"/></linearGradient></defs><g opacity="1"><rect x="0" y="0" width="10" height="11" fill="#111"/><rect x="2" y="1.00" width="6" height="4.00" fill="url(#g69)"/><rect x="2" y="6.00" width="6" height="4.00" fill="url(#g69)"/></g></svg><span class="t" style="left:389.30px;top:325px;font-size:10.4px;color:#000;letter-spacing:0.038px;">MP4 360p AVC</span><div class="r" style="left:359px;top:345px;width:10px;height:1px;background:repeating-linear-gradient(90deg,#808080 0 1px,transparent 1px 2px);"></div><svg class="r" style="left:371px;top:339px;" width="12" height="13" viewBox="0 0 12 13"><defs><linearGradient id="g70" x1="0" y1="0" x2="0.3" y2="1"><stop offset="0" stop-color="#ffd08a"/><stop offset="1" stop-color="#d9891c"/></linearGradient></defs><g opacity="1"><rect x="0" y="0" width="12" height="13" fill="#111"/><rect x="2" y="1.00" width="8" height="5.00" fill="url(#g70)"/><rect x="2" y="7.00" width="8" height="5.00" fill="url(#g70)"/><rect x="0.50" y="1.88" width="1.00" height="1.00" fill="#fff"/><rect x="10.50" y="1.88" width="1.00" height="1.00" fill="#fff"/><rect x="0.50" y="4.62" width="1.00" height="1.00" fill="#fff"/><rect x="10.50" y="4.62" width="1.00" height="1.00" fill="#fff"/><rect x="0.50" y="7.38" width="1.00" height="1.00" fill="#fff"/><rect x="10.50" y="7.38" width="1.00" height="1.00" fill="#fff"/><rect x="0.50" y="10.12" width="1.00" height="1.00" fill="#fff"/><rect x="10.50" y="10.12" width="1.00" height="1.00" fill="#fff"/></g></svg><span class="t" style="left:389.30px;top:341px;font-size:10.4px;color:#000;letter-spacing:0.038px;">MP4 480p AVC</span><div class="r" style="left:359px;top:361px;width:10px;height:1px;background:repeating-linear-gradient(90deg,#808080 0 1px,transparent 1px 2px);"></div><svg class="r" style="left:370px;top:354px;" width="14" height="15" viewBox="0 0 14 15"><defs><linearGradient id="g71" x1="0" y1="0" x2="0.3" y2="1"><stop offset="0" stop-color="#ffd08a"/><stop offset="1" stop-color="#d9891c"/></linearGradient></defs><g opacity="1"><rect x="0" y="0" width="14" height="15" fill="#111"/><rect x="3" y="1.00" width="8" height="6.00" fill="url(#g71)"/><rect x="3" y="8.00" width="8" height="6.00" fill="url(#g71)"/><rect x="0.75" y="1.88" width="1.50" height="1.50" fill="#fff"/><rect x="11.75" y="1.88" width="1.50" height="1.50" fill="#fff"/><rect x="0.75" y="5.12" width="1.50" height="1.50" fill="#fff"/><rect x="11.75" y="5.12" width="1.50" height="1.50" fill="#fff"/><rect x="0.75" y="8.38" width="1.50" height="1.50" fill="#fff"/><rect x="11.75" y="8.38" width="1.50" height="1.50" fill="#fff"/><rect x="0.75" y="11.62" width="1.50" height="1.50" fill="#fff"/><rect x="11.75" y="11.62" width="1.50" height="1.50" fill="#fff"/></g></svg><span class="t" style="left:389.30px;top:357px;font-size:10.4px;color:#000;letter-spacing:0.038px;">MP4 720p AVC</span><div class="r" style="left:359px;top:377px;width:10px;height:1px;background:repeating-linear-gradient(90deg,#808080 0 1px,transparent 1px 2px);"></div><svg class="r" style="left:372px;top:372px;" width="10" height="11" viewBox="0 0 10 11"><defs><linearGradient id="g72" x1="0" y1="0" x2="0.3" y2="1"><stop offset="0" stop-color="#ffd08a"/><stop offset="1" stop-color="#d9891c"/></linearGradient></defs><g opacity="1"><rect x="0" y="0" width="10" height="11" fill="#111"/><rect x="2" y="1.00" width="6" height="4.00" fill="url(#g72)"/><rect x="2" y="6.00" width="6" height="4.00" fill="url(#g72)"/></g></svg><span class="t" style="left:389.30px;top:373px;font-size:10.4px;color:#000;letter-spacing:0.126px;">MP4 320x240 AVC</span><div class="r" style="left:359px;top:393px;width:10px;height:1px;background:repeating-linear-gradient(90deg,#808080 0 1px,transparent 1px 2px);"></div><svg class="r" style="left:371px;top:387px;" width="12" height="13" viewBox="0 0 12 13"><defs><linearGradient id="g73" x1="0" y1="0" x2="0.3" y2="1"><stop offset="0" stop-color="#ffd08a"/><stop offset="1" stop-color="#d9891c"/></linearGradient></defs><g opacity="1"><rect x="0" y="0" width="12" height="13" fill="#111"/><rect x="2" y="1.00" width="8" height="5.00" fill="url(#g73)"/><rect x="2" y="7.00" width="8" height="5.00" fill="url(#g73)"/><rect x="0.50" y="1.88" width="1.00" height="1.00" fill="#fff"/><rect x="10.50" y="1.88" width="1.00" height="1.00" fill="#fff"/><rect x="0.50" y="4.62" width="1.00" height="1.00" fill="#fff"/><rect x="10.50" y="4.62" width="1.00" height="1.00" fill="#fff"/><rect x="0.50" y="7.38" width="1.00" height="1.00" fill="#fff"/><rect x="10.50" y="7.38" width="1.00" height="1.00" fill="#fff"/><rect x="0.50" y="10.12" width="1.00" height="1.00" fill="#fff"/><rect x="10.50" y="10.12" width="1.00" height="1.00" fill="#fff"/></g></svg><span class="t" style="left:389.30px;top:389px;font-size:10.4px;color:#000;letter-spacing:0.126px;">MP4 480x360 AVC</span><div class="r" style="left:359px;top:409px;width:10px;height:1px;background:repeating-linear-gradient(90deg,#808080 0 1px,transparent 1px 2px);"></div><svg class="r" style="left:370px;top:402px;" width="14" height="15" viewBox="0 0 14 15"><defs><linearGradient id="g74" x1="0" y1="0" x2="0.3" y2="1"><stop offset="0" stop-color="#ffd08a"/><stop offset="1" stop-color="#d9891c"/></linearGradient></defs><g opacity="1"><rect x="0" y="0" width="14" height="15" fill="#111"/><rect x="3" y="1.00" width="8" height="6.00" fill="url(#g74)"/><rect x="3" y="8.00" width="8" height="6.00" fill="url(#g74)"/><rect x="0.75" y="1.88" width="1.50" height="1.50" fill="#fff"/><rect x="11.75" y="1.88" width="1.50" height="1.50" fill="#fff"/><rect x="0.75" y="5.12" width="1.50" height="1.50" fill="#fff"/><rect x="11.75" y="5.12" width="1.50" height="1.50" fill="#fff"/><rect x="0.75" y="8.38" width="1.50" height="1.50" fill="#fff"/><rect x="11.75" y="8.38" width="1.50" height="1.50" fill="#fff"/><rect x="0.75" y="11.62" width="1.50" height="1.50" fill="#fff"/><rect x="11.75" y="11.62" width="1.50" height="1.50" fill="#fff"/></g></svg><span class="t" style="left:389.30px;top:405px;font-size:10.4px;color:#000;letter-spacing:0.265px;">MP4 640x360 AVC Широкий экран</span><div class="r" style="left:359px;top:410px;width:1px;height:15px;background:#fff;"></div><svg class="r" style="left:335px;top:421px;" width="9" height="9" viewBox="0 0 9 9"><rect x="0.5" y="0.5" width="8" height="8" rx="1" fill="#f4f4f4" stroke="#a0a0a0" stroke-width="1"/><rect x="2" y="4" width="5" height="1" fill="#2c4fa8"/><rect x="4" y="2" width="1" height="5" fill="#2c4fa8"/></svg><div class="r" style="left:344px;top:425px;width:6px;height:1px;background:repeating-linear-gradient(90deg,#808080 0 1px,transparent 1px 2px);"></div><svg class="r" style="left:350px;top:417px;" width="16" height="15" viewBox="0 0 16 15"><defs><linearGradient id="g75" x1="0" y1="0" x2="0.3" y2="1"><stop offset="0" stop-color="#9be37a"/><stop offset="1" stop-color="#2f9a2f"/></linearGradient></defs><g opacity="1"><rect x="0" y="0" width="16" height="15" fill="#111"/><rect x="3" y="1.00" width="10" height="6.00" fill="url(#g75)"/><rect x="3" y="8.00" width="10" height="6.00" fill="url(#g75)"/><rect x="0.75" y="1.88" width="1.50" height="1.50" fill="#fff"/><rect x="13.75" y="1.88" width="1.50" height="1.50" fill="#fff"/><rect x="0.75" y="5.12" width="1.50" height="1.50" fill="#fff"/><rect x="13.75" y="5.12" width="1.50" height="1.50" fill="#fff"/><rect x="0.75" y="8.38" width="1.50" height="1.50" fill="#fff"/><rect x="13.75" y="8.38" width="1.50" height="1.50" fill="#fff"/><rect x="0.75" y="11.62" width="1.50" height="1.50" fill="#fff"/><rect x="13.75" y="11.62" width="1.50" height="1.50" fill="#fff"/></g></svg><svg class="r" style="left:358px;top:423px;" width="8" height="10" viewBox="0 0 8 10"><rect x="0.5" y="0.5" width="7" height="9" rx="1.5" fill="#a8a8a8" stroke="#6a7a6a" stroke-width="0.8"/><rect x="1.5" y="1.5" width="5" height="3" fill="#6a8fb0"/><circle cx="4" cy="6.8" r="1.6" fill="#ddd"/></svg><span class="t" style="left:370.80px;top:420px;font-size:10.75px;color:#000;letter-spacing:0.005px;">Совместимые мобильные устройства AVI</span><svg class="r" style="left:335px;top:437px;" width="9" height="9" viewBox="0 0 9 9"><rect x="0.5" y="0.5" width="8" height="8" rx="1" fill="#f4f4f4" stroke="#a0a0a0" stroke-width="1"/><rect x="2" y="4" width="5" height="1" fill="#2c4fa8"/></svg><div class="r" style="left:344px;top:441px;width:6px;height:1px;background:repeating-linear-gradient(90deg,#808080 0 1px,transparent 1px 2px);"></div><svg class="r" style="left:350px;top:433px;" width="16" height="15" viewBox="0 0 16 15"><defs><linearGradient id="g76" x1="0" y1="0" x2="0.3" y2="1"><stop offset="0" stop-color="#ffd08a"/><stop offset="1" stop-color="#d9891c"/></linearGradient></defs><g opacity="1"><rect x="0" y="0" width="16" height="15" fill="#111"/><rect x="3" y="1.00" width="10" height="6.00" fill="url(#g76)"/><rect x="3" y="8.00" width="10" height="6.00" fill="url(#g76)"/><rect x="0.75" y="1.88" width="1.50" height="1.50" fill="#fff"/><rect x="13.75" y="1.88" width="1.50" height="1.50" fill="#fff"/><rect x="0.75" y="5.12" width="1.50" height="1.50" fill="#fff"/><rect x="13.75" y="5.12" width="1.50" height="1.50" fill="#fff"/><rect x="0.75" y="8.38" width="1.50" height="1.50" fill="#fff"/><rect x="13.75" y="8.38" width="1.50" height="1.50" fill="#fff"/><rect x="0.75" y="11.62" width="1.50" height="1.50" fill="#fff"/><rect x="13.75" y="11.62" width="1.50" height="1.50" fill="#fff"/></g></svg><svg class="r" style="left:358px;top:439px;" width="8" height="10" viewBox="0 0 8 10"><rect x="0.5" y="0.5" width="7" height="9" rx="1.5" fill="#a8a8a8" stroke="#6a7a6a" stroke-width="0.8"/><rect x="1.5" y="1.5" width="5" height="3" fill="#6a8fb0"/><circle cx="4" cy="6.8" r="1.6" fill="#ddd"/></svg><span class="t" style="left:370.80px;top:436px;font-size:10.75px;color:#000;letter-spacing:-0.080px;">Совместимые мобильные устройства 3GP</span><div class="r" style="left:359px;top:457px;width:10px;height:1px;background:repeating-linear-gradient(90deg,#808080 0 1px,transparent 1px 2px);"></div><svg class="r" style="left:371px;top:451px;" width="12" height="13" viewBox="0 0 12 13"><defs><linearGradient id="g77" x1="0" y1="0" x2="0.3" y2="1"><stop offset="0" stop-color="#ffd08a"/><stop offset="1" stop-color="#d9891c"/></linearGradient></defs><g opacity="1"><rect x="0" y="0" width="12" height="13" fill="#111"/><rect x="2" y="1.00" width="8" height="5.00" fill="url(#g77)"/><rect x="2" y="7.00" width="8" height="5.00" fill="url(#g77)"/><rect x="0.50" y="1.88" width="1.00" height="1.00" fill="#fff"/><rect x="10.50" y="1.88" width="1.00" height="1.00" fill="#fff"/><rect x="0.50" y="4.62" width="1.00" height="1.00" fill="#fff"/><rect x="10.50" y="4.62" width="1.00" height="1.00" fill="#fff"/><rect x="0.50" y="7.38" width="1.00" height="1.00" fill="#fff"/><rect x="10.50" y="7.38" width="1.00" height="1.00" fill="#fff"/><rect x="0.50" y="10.12" width="1.00" height="1.00" fill="#fff"/><rect x="10.50" y="10.12" width="1.00" height="1.00" fill="#fff"/></g></svg><span class="t" style="left:389.30px;top:453px;font-size:10.4px;color:#000;letter-spacing:0.060px;">3GP 176x144 H263</span><div class="r" style="left:359px;top:473px;width:10px;height:1px;background:repeating-linear-gradient(90deg,#808080 0 1px,transparent 1px 2px);"></div><svg class="r" style="left:370px;top:466px;" width="14" height="15" viewBox="0 0 14 15"><defs><linearGradient id="g78" x1="0" y1="0" x2="0.3" y2="1"><stop offset="0" stop-color="#ffd08a"/><stop offset="1" stop-color="#d9891c"/></linearGradient></defs><g opacity="1"><rect x="0" y="0" width="14" height="15" fill="#111"/><rect x="3" y="1.00" width="8" height="6.00" fill="url(#g78)"/><rect x="3" y="8.00" width="8" height="6.00" fill="url(#g78)"/><rect x="0.75" y="1.88" width="1.50" height="1.50" fill="#fff"/><rect x="11.75" y="1.88" width="1.50" height="1.50" fill="#fff"/><rect x="0.75" y="5.12" width="1.50" height="1.50" fill="#fff"/><rect x="11.75" y="5.12" width="1.50" height="1.50" fill="#fff"/><rect x="0.75" y="8.38" width="1.50" height="1.50" fill="#fff"/><rect x="11.75" y="8.38" width="1.50" height="1.50" fill="#fff"/><rect x="0.75" y="11.62" width="1.50" height="1.50" fill="#fff"/><rect x="11.75" y="11.62" width="1.50" height="1.50" fill="#fff"/></g></svg><span class="t" style="left:389.30px;top:469px;font-size:10.4px;color:#000;letter-spacing:0.060px;">3GP 352x288 H263</span><div class="r" style="left:359px;top:489px;width:10px;height:1px;background:repeating-linear-gradient(90deg,#808080 0 1px,transparent 1px 2px);"></div><svg class="r" style="left:371px;top:483px;" width="12" height="13" viewBox="0 0 12 13"><defs><linearGradient id="g79" x1="0" y1="0" x2="0.3" y2="1"><stop offset="0" stop-color="#88d8f8"/><stop offset="1" stop-color="#1f87d8"/></linearGradient></defs><g opacity="1"><rect x="0" y="0" width="12" height="13" fill="#111"/><rect x="2" y="1.00" width="8" height="5.00" fill="url(#g79)"/><rect x="2" y="7.00" width="8" height="5.00" fill="url(#g79)"/><rect x="0.50" y="1.88" width="1.00" height="1.00" fill="#fff"/><rect x="10.50" y="1.88" width="1.00" height="1.00" fill="#fff"/><rect x="0.50" y="4.62" width="1.00" height="1.00" fill="#fff"/><rect x="10.50" y="4.62" width="1.00" height="1.00" fill="#fff"/><rect x="0.50" y="7.38" width="1.00" height="1.00" fill="#fff"/><rect x="10.50" y="7.38" width="1.00" height="1.00" fill="#fff"/><rect x="0.50" y="10.12" width="1.00" height="1.00" fill="#fff"/><rect x="10.50" y="10.12" width="1.00" height="1.00" fill="#fff"/></g></svg><span class="t" style="left:389.30px;top:485px;font-size:10.4px;color:#000;letter-spacing:-0.102px;">3GP 176x144 MPEG4</span><div class="r" style="left:359px;top:505px;width:10px;height:1px;background:repeating-linear-gradient(90deg,#808080 0 1px,transparent 1px 2px);"></div><svg class="r" style="left:370px;top:498px;" width="14" height="15" viewBox="0 0 14 15"><defs><linearGradient id="g80" x1="0" y1="0" x2="0.3" y2="1"><stop offset="0" stop-color="#88d8f8"/><stop offset="1" stop-color="#1f87d8"/></linearGradient></defs><g opacity="1"><rect x="0" y="0" width="14" height="15" fill="#111"/><rect x="3" y="1.00" width="8" height="6.00" fill="url(#g80)"/><rect x="3" y="8.00" width="8" height="6.00" fill="url(#g80)"/><rect x="0.75" y="1.88" width="1.50" height="1.50" fill="#fff"/><rect x="11.75" y="1.88" width="1.50" height="1.50" fill="#fff"/><rect x="0.75" y="5.12" width="1.50" height="1.50" fill="#fff"/><rect x="11.75" y="5.12" width="1.50" height="1.50" fill="#fff"/><rect x="0.75" y="8.38" width="1.50" height="1.50" fill="#fff"/><rect x="11.75" y="8.38" width="1.50" height="1.50" fill="#fff"/><rect x="0.75" y="11.62" width="1.50" height="1.50" fill="#fff"/><rect x="11.75" y="11.62" width="1.50" height="1.50" fill="#fff"/></g></svg><span class="t" style="left:389.30px;top:501px;font-size:10.4px;color:#000;letter-spacing:-0.102px;">3GP 352x288 MPEG4</span><svg class="r" style="left:335px;top:517px;" width="9" height="9" viewBox="0 0 9 9"><rect x="0.5" y="0.5" width="8" height="8" rx="1" fill="#f4f4f4" stroke="#a0a0a0" stroke-width="1"/><rect x="2" y="4" width="5" height="1" fill="#2c4fa8"/><rect x="4" y="2" width="1" height="5" fill="#2c4fa8"/></svg><div class="r" style="left:344px;top:521px;width:6px;height:1px;background:repeating-linear-gradient(90deg,#808080 0 1px,transparent 1px 2px);"></div><svg class="r" style="left:351px;top:514px;" width="14" height="15" viewBox="0 0 14 15"><defs><linearGradient id="g81" x1="0" y1="0" x2="0.3" y2="1"><stop offset="0" stop-color="#ffd08a"/><stop offset="1" stop-color="#d9891c"/></linearGradient></defs><g opacity="1"><rect x="0" y="0" width="14" height="15" fill="#111"/><rect x="3" y="1.00" width="8" height="6.00" fill="url(#g81)"/><rect x="3" y="8.00" width="8" height="6.00" fill="url(#g81)"/><rect x="0.75" y="1.88" width="1.50" height="1.50" fill="#fff"/><rect x="11.75" y="1.88" width="1.50" height="1.50" fill="#fff"/><rect x="0.75" y="5.12" width="1.50" height="1.50" fill="#fff"/><rect x="11.75" y="5.12" width="1.50" height="1.50" fill="#fff"/><rect x="0.75" y="8.38" width="1.50" height="1.50" fill="#fff"/><rect x="11.75" y="8.38" width="1.50" height="1.50" fill="#fff"/><rect x="0.75" y="11.62" width="1.50" height="1.50" fill="#fff"/><rect x="11.75" y="11.62" width="1.50" height="1.50" fill="#fff"/></g></svg><span class="t" style="left:369.80px;top:517px;font-size:10.3px;color:#000;">HD AVC</span><svg class="r" style="left:335px;top:533px;" width="9" height="9" viewBox="0 0 9 9"><rect x="0.5" y="0.5" width="8" height="8" rx="1" fill="#f4f4f4" stroke="#a0a0a0" stroke-width="1"/><rect x="2" y="4" width="5" height="1" fill="#2c4fa8"/><rect x="4" y="2" width="1" height="5" fill="#2c4fa8"/></svg><div class="r" style="left:344px;top:537px;width:6px;height:1px;background:repeating-linear-gradient(90deg,#808080 0 1px,transparent 1px 2px);"></div><svg class="r" style="left:351px;top:530px;" width="14" height="15" viewBox="0 0 14 15"><defs><linearGradient id="g82" x1="0" y1="0" x2="0.3" y2="1"><stop offset="0" stop-color="#ffd08a"/><stop offset="1" stop-color="#d9891c"/></linearGradient></defs><g opacity="1"><rect x="0" y="0" width="14" height="15" fill="#111"/><rect x="3" y="1.00" width="8" height="6.00" fill="url(#g82)"/><rect x="3" y="8.00" width="8" height="6.00" fill="url(#g82)"/><rect x="0.75" y="1.88" width="1.50" height="1.50" fill="#fff"/><rect x="11.75" y="1.88" width="1.50" height="1.50" fill="#fff"/><rect x="0.75" y="5.12" width="1.50" height="1.50" fill="#fff"/><rect x="11.75" y="5.12" width="1.50" height="1.50" fill="#fff"/><rect x="0.75" y="8.38" width="1.50" height="1.50" fill="#fff"/><rect x="11.75" y="8.38" width="1.50" height="1.50" fill="#fff"/><rect x="0.75" y="11.62" width="1.50" height="1.50" fill="#fff"/><rect x="11.75" y="11.62" width="1.50" height="1.50" fill="#fff"/></g></svg><span class="t" style="left:369.80px;top:533px;font-size:10.3px;color:#000;">HD HEVC</span><div class="r" style="left:608px;top:206px;width:510px;height:114px;border:1px solid #dcdcdc;border-radius:3px;"></div><div class="r" style="left:614px;top:200px;width:52px;height:12px;background:#fff;"></div><span class="t" style="left:617.00px;top:202px;font-size:11px;color:#000;letter-spacing:-0.250px;">Профиль</span><svg class="r" style="left:617px;top:221px;" width="31" height="31" viewBox="0 0 31 31"><rect x="20.5" y="0.5" width="10.5" height="21.5" rx="1" fill="#1a1a1a"/><rect x="21.5" y="1.8" width="8.5" height="14.5" fill="#f2f2f2"/><g><rect x="22.3" y="3" width="2" height="2" fill="#7aa0e0"/><rect x="25.3" y="3" width="2" height="2" fill="#6a8ad0"/><rect x="28" y="3" width="1.6" height="2" fill="#f0b060"/><rect x="22.3" y="7" width="2" height="2" fill="#e07a50"/><rect x="25.3" y="7" width="2" height="2" fill="#3a6aa0"/><rect x="28" y="7" width="1.6" height="2" fill="#e08a50"/><rect x="22.3" y="11" width="2" height="2" fill="#80c0c0"/><rect x="25.3" y="11" width="2" height="2" fill="#d040a0"/><rect x="28" y="11" width="1.6" height="2" fill="#a0d080"/></g><rect x="10" y="3" width="11.5" height="24" rx="1" fill="#222" stroke="#555" stroke-width="0.5"/><rect x="11" y="5" width="9.5" height="14" fill="#2e2e2e"/><rect x="13" y="6.5" width="3.5" height="4.5" fill="#d0702a"/><rect x="16.5" y="6.5" width="3.5" height="4.5" fill="#5a6a90"/><rect x="11.5" y="11.5" width="5" height="4" fill="#e8e8e8"/><rect x="16.5" y="11.5" width="3.5" height="4" fill="#e8a040"/><rect x="11.5" y="16" width="3" height="3" fill="#60b060"/><rect x="14.5" y="16" width="3" height="3" fill="#f0f0f0"/><rect x="0" y="9" width="12.5" height="22" rx="1" fill="#0c0c0c" stroke="#333" stroke-width="0.5"/><circle cx="6" cy="15.5" r="2.6" fill="#f2c23a"/><ellipse cx="7.5" cy="17" rx="2.2" ry="1.3" fill="#ddd"/><g fill="#d8d0b0"><rect x="2" y="22" width="1.5" height="1"/><rect x="4.5" y="22" width="2" height="1"/><rect x="7.5" y="22" width="1.5" height="1"/><rect x="10" y="22" width="1.5" height="1" fill="#d8b030"/></g></svg><div class="r" style="left:663px;top:228px;width:243px;height:20px;background:#e1e1e1;border:1px solid #adadad;"></div><svg class="r" style="left:667px;top:231px;" width="14" height="14" viewBox="0 0 14 14"><defs><linearGradient id="g83" x1="0" y1="0" x2="0.3" y2="1"><stop offset="0" stop-color="#88d8f8"/><stop offset="1" stop-color="#1f87d8"/></linearGradient></defs><g opacity="1"><rect x="0" y="0" width="14" height="14" fill="#111"/><rect x="3" y="1.00" width="8" height="5.50" fill="url(#g83)"/><rect x="3" y="7.50" width="8" height="5.50" fill="url(#g83)"/><rect x="0.75" y="1.75" width="1.50" height="1.50" fill="#fff"/><rect x="11.75" y="1.75" width="1.50" height="1.50" fill="#fff"/><rect x="0.75" y="4.75" width="1.50" height="1.50" fill="#fff"/><rect x="11.75" y="4.75" width="1.50" height="1.50" fill="#fff"/><rect x="0.75" y="7.75" width="1.50" height="1.50" fill="#fff"/><rect x="11.75" y="7.75" width="1.50" height="1.50" fill="#fff"/><rect x="0.75" y="10.75" width="1.50" height="1.50" fill="#fff"/><rect x="11.75" y="10.75" width="1.50" height="1.50" fill="#fff"/></g></svg><span class="t" style="left:685.80px;top:234px;font-size:10.5px;color:#000;letter-spacing:0.046px;">MP4 640x360 MPEG4 Широкий экран</span><svg class="r" style="left:893px;top:236px;" width="9" height="6" viewBox="0 0 9 6"><path d="M0.5 0.5 L4.5 4.5 L8.5 0.5" fill="none" stroke="#444" stroke-width="1.1"/></svg><div class="r" style="left:965px;top:225px;width:134px;height:29px;background:#fff;border:1px solid #333;"></div><svg class="r" style="left:973px;top:232px;" width="15" height="14" viewBox="0 0 15 14"><defs><linearGradient id="g84" x1="0" y1="0" x2="1" y2="0"><stop offset="0" stop-color="#ffe0b0"/><stop offset="1" stop-color="#f07d10"/></linearGradient></defs><path d="M0.8 4 L7.5 4 L7.5 0.8 L13.5 7 L7.5 13.2 L7.5 10 L0.8 10 Z" fill="url(#g84)" stroke="#d9620a" stroke-width="1"/></svg><span class="t" style="left:1034.50px;top:235px;font-size:11.3px;color:#000;">OK</span><svg class="r" style="left:618px;top:273px;" width="28" height="31" viewBox="0 0 28 31"><g transform="translate(4,0)"><g opacity="1"><rect x="1" y="29.5" width="22" height="1.5" fill="#bdbdbd" opacity="0.7"/><path d="M0.5 0.5 L15.5 0.5 L22.5 7.5 L22.5 29.5 L0.5 29.5 Z" fill="#f4f4f4" stroke="#c9c9c9" stroke-width="1"/><path d="M15.5 0.5 L15.5 7.5 L22.5 7.5 Z" fill="#ececec" stroke="#c9c9c9" stroke-width="0.8"/></g></g><rect x="0" y="3" width="17" height="7" fill="#e8861a"/><text x="8.5" y="9.3" font-family="Liberation Sans" font-weight="bold" font-size="6.6" fill="#fff" text-anchor="middle">MP4</text><circle cx="15" cy="19" r="6" fill="#d9d9d9" stroke="#9a9a9a" stroke-width="0.8"/><g fill="#2a2220"><circle cx="15" cy="15.5" r="1.3"/><circle cx="11.8" cy="18" r="1.3"/><circle cx="18.2" cy="18" r="1.3"/><circle cx="13" cy="22" r="1.3"/><circle cx="17" cy="22" r="1.3"/></g><path d="M9.5 22 Q11 28 22 27" stroke="#2a2220" stroke-width="2" fill="none"/></svg><div class="r" style="left:664px;top:286px;width:11px;height:11px;background:#fff;border:1px solid #8f8f8f;"></div><span class="t" style="left:678.00px;top:286px;font-size:10.8px;color:#000;letter-spacing:0.050px;">Сохранить как по умолчанию</span><svg class="r" style="left:851px;top:284px;" width="16" height="13" viewBox="0 0 16 13"><rect x="0.5" y="0.5" width="15" height="12" fill="#000" stroke="#888" stroke-width="1"/><rect x="1" y="1" width="14" height="2" fill="#c8cdd3"/><text x="2" y="10.5" font-family="Liberation Mono" font-weight="bold" font-size="7" fill="#fff">C:\_</text></svg><svg class="r" style="left:885px;top:283px;" width="14" height="14" viewBox="0 0 14 14"><defs><linearGradient id="g85" x1="0" y1="0" x2="0" y2="1"><stop offset="0" stop-color="#4d86ea"/><stop offset="1" stop-color="#1a46b8"/></linearGradient></defs><rect x="0" y="0" width="14" height="14" fill="url(#g85)"/><text x="7" y="11.5" font-family="Liberation Sans" font-size="11" fill="#fff" text-anchor="middle">?</text></svg><div class="r" style="left:965px;top:275px;width:134px;height:29px;background:#fff;border:1px solid #adadad;"></div><svg class="r" style="left:972px;top:281px;" width="16" height="16" viewBox="0 0 16 16"><path d="M0.7 0.7 L14 0.7 L15.3 2 L15.3 15.3 L0.7 15.3 Z" fill="#78a2e0" stroke="#2f62c0" stroke-width="1.3"/><rect x="2.3" y="1.5" width="11" height="4.7" fill="#f4f8fd"/><rect x="5" y="2.3" width="1.1" height="2.6" fill="#3a6ac0"/><rect x="3" y="9.5" width="9.8" height="5.2" fill="#fff"/><rect x="4" y="10.6" width="7.8" height="1.2" fill="#72b84a"/><rect x="4" y="12.6" width="7.8" height="1.2" fill="#72b84a"/></svg><span class="t" style="left:1004.50px;top:285px;font-size:10.9px;color:#000;letter-spacing:0.093px;">Сохранить как</span><div class="r" style="left:608px;top:333px;width:510px;height:301px;border:1px solid #dcdcdc;background:#fff;"></div><div class="r" style="left:610px;top:335px;width:506px;height:21px;border:1px solid #e3e3e3;"></div><div class="r" style="left:915px;top:336px;width:2px;height:19px;background:#e3e3e3;"></div><span class="t" style="left:615.40px;top:341px;font-size:11px;color:#000;letter-spacing:0.199px;">Показатель</span><span class="t" style="left:921.20px;top:341px;font-size:11px;color:#000;letter-spacing:-0.112px;">Значение</span><div class="r" style="left:610px;top:372px;width:489px;height:1px;background:#e6e6e6;"></div><div class="r" style="left:914px;top:356px;width:1px;height:16px;background:#e6e6e6;"></div><span class="t" style="left:631.00px;top:359px;font-size:10.7px;color:#000;">Bitrate ( KB/s )</span><span class="t" style="left:920.00px;top:359px;font-size:10.7px;color:#000;">1024</span><div class="r" style="left:610px;top:389px;width:489px;height:1px;background:#e6e6e6;"></div><div class="r" style="left:914px;top:373px;width:1px;height:16px;background:#e6e6e6;"></div><span class="t" style="left:631.00px;top:376px;font-size:10.7px;color:#a8a8a8;">CRF</span><span class="t" style="left:920.00px;top:376px;font-size:10.7px;color:#a8a8a8;">Выкл.</span><div class="r" style="left:610px;top:406px;width:489px;height:1px;background:#e6e6e6;"></div><div class="r" style="left:914px;top:390px;width:1px;height:16px;background:#e6e6e6;"></div><span class="t" style="left:631.00px;top:393px;font-size:10.7px;color:#000;">Кадр</span><span class="t" style="left:920.00px;top:393px;font-size:10.7px;color:#000;">Умолчания</span><div class="r" style="left:610px;top:423px;width:489px;height:1px;background:#e6e6e6;"></div><div class="r" style="left:914px;top:407px;width:1px;height:16px;background:#e6e6e6;"></div><span class="t" style="left:631.00px;top:410px;font-size:10.7px;color:#000;">Стороны</span><span class="t" style="left:920.00px;top:410px;font-size:10.7px;color:#000;">Автоматически</span><div class="r" style="left:610px;top:440px;width:489px;height:1px;background:#e6e6e6;"></div><div class="r" style="left:914px;top:424px;width:1px;height:16px;background:#e6e6e6;"></div><span class="t" style="left:631.00px;top:427px;font-size:10.7px;color:#000;">Кодировать в 2 прохода</span><span class="t" style="left:920.00px;top:427px;font-size:10.7px;color:#000;">Нет</span><div class="r" style="left:610px;top:457px;width:489px;height:1px;background:#e6e6e6;"></div><svg class="r" style="left:616px;top:446px;" width="6" height="6" viewBox="0 0 6 6"><path d="M5.5 0.5 L5.5 5.5 L0.5 5.5 Z" fill="#a0a0a0"/></svg><span class="t" style="left:631.00px;top:443px;font-size:11.75px;color:#000;font-weight:bold;">Аудиопоток</span><div class="r" style="left:610px;top:474px;width:489px;height:1px;background:#e6e6e6;"></div><div class="r" style="left:914px;top:458px;width:1px;height:16px;background:#e6e6e6;"></div><span class="t" style="left:631.00px;top:461px;font-size:10.7px;color:#a8a8a8;">Аудиокодек</span><span class="t" style="left:920.00px;top:461px;font-size:10.7px;color:#a8a8a8;">AAC</span><div class="r" style="left:610px;top:491px;width:489px;height:1px;background:#e6e6e6;"></div><div class="r" style="left:914px;top:475px;width:1px;height:16px;background:#e6e6e6;"></div><span class="t" style="left:631.00px;top:478px;font-size:10.7px;color:#000;">Sample Rate ( HZ )</span><span class="t" style="left:920.00px;top:478px;font-size:10.7px;color:#000;">44100</span><div class="r" style="left:610px;top:508px;width:489px;height:1px;background:#e6e6e6;"></div><div class="r" style="left:914px;top:492px;width:1px;height:16px;background:#e6e6e6;"></div><span class="t" style="left:631.00px;top:495px;font-size:10.7px;color:#000;">Bitrate ( KB/s )</span><span class="t" style="left:920.00px;top:495px;font-size:10.7px;color:#000;">128</span><div class="r" style="left:610px;top:525px;width:489px;height:1px;background:#e6e6e6;"></div><div class="r" style="left:914px;top:509px;width:1px;height:16px;background:#e6e6e6;"></div><span class="t" style="left:631.00px;top:512px;font-size:10.7px;color:#000;">Канал</span><span class="t" style="left:920.00px;top:512px;font-size:10.7px;color:#000;">2</span><div class="r" style="left:610px;top:542px;width:489px;height:1px;background:#e6e6e6;"></div><div class="r" style="left:914px;top:526px;width:1px;height:16px;background:#e6e6e6;"></div><span class="t" style="left:631.00px;top:529px;font-size:10.7px;color:#000;">Без звука</span><span class="t" style="left:920.00px;top:529px;font-size:10.7px;color:#000;">Нет</span><div class="r" style="left:610px;top:559px;width:489px;height:1px;background:#e6e6e6;"></div><div class="r" style="left:914px;top:543px;width:1px;height:16px;background:#e6e6e6;"></div><span class="t" style="left:631.00px;top:546px;font-size:10.7px;color:#000;">Громкость</span><span class="t" style="left:920.00px;top:546px;font-size:10.7px;color:#000;">100%</span><div class="r" style="left:610px;top:576px;width:489px;height:1px;background:#e6e6e6;"></div><div class="r" style="left:914px;top:560px;width:1px;height:16px;background:#e6e6e6;"></div><span class="t" style="left:631.00px;top:563px;font-size:10.7px;color:#000;">Индекс аудиопотока</span><span class="t" style="left:920.00px;top:563px;font-size:10.7px;color:#000;">Умолчания</span><div class="r" style="left:610px;top:593px;width:489px;height:1px;background:#e6e6e6;"></div><svg class="r" style="left:616px;top:582px;" width="6" height="6" viewBox="0 0 6 6"><path d="M5.5 0.5 L5.5 5.5 L0.5 5.5 Z" fill="#a0a0a0"/></svg><span class="t" style="left:631.00px;top:579px;font-size:11.75px;color:#000;font-weight:bold;">Дополнительные субтитры</span><div class="r" style="left:610px;top:610px;width:489px;height:1px;background:#e6e6e6;"></div><div class="r" style="left:914px;top:594px;width:1px;height:16px;background:#e6e6e6;"></div><span class="t" style="left:631.00px;top:597px;font-size:10.7px;color:#000;">Тип</span><span class="t" style="left:920.00px;top:597px;font-size:10.7px;color:#000;">Автоматически</span><div class="r" style="left:610px;top:627px;width:489px;height:1px;background:#e6e6e6;"></div><div class="r" style="left:914px;top:611px;width:1px;height:16px;background:#e6e6e6;"></div><span class="t" style="left:631.00px;top:614px;font-size:10.7px;color:#000;">Дополнительные субтитры (srt;ass;ssa;idx)</span><span class="t" style="left:920.00px;top:614px;font-size:10.7px;color:#000;"></span><div class="r" style="left:610px;top:628px;width:489px;height:4px;overflow:hidden;"><span class="t" style="left:21px;top:1px;font-size:10.7px;">Расположение субтитров (Высота)</span><span class="t" style="left:310px;top:1px;font-size:10.7px;">Умолчания</span></div><div class="r" style="left:914px;top:627px;width:1px;height:5px;background:#e6e6e6;"></div><svg class="r" style="left:1103px;top:362px;" width="9" height="5" viewBox="0 0 9 5"><path d="M0 5 L4.5 0 L9 5 Z" fill="#606060"/></svg><div class="r" style="left:1099px;top:410px;width:17px;height:110px;border:1px solid #dedede;background:#fff;"></div><div class="r" style="left:1103px;top:459px;width:9px;height:1px;background:#e0e0e0;"></div><div class="r" style="left:1103px;top:465px;width:9px;height:1px;background:#e0e0e0;"></div><div class="r" style="left:1103px;top:471px;width:9px;height:1px;background:#e0e0e0;"></div><svg class="r" style="left:1103px;top:622px;" width="9" height="5" viewBox="0 0 9 5"><path d="M0 0 L4.5 5 L9 0 Z" fill="#606060"/></svg><div class="r" style="left:983px;top:650px;width:135px;height:29px;background:#fff;border:1px solid #adadad;"></div><svg class="r" style="left:991px;top:653px;" width="20" height="21" viewBox="0 0 20 21"><defs><linearGradient id="g86" x1="0" y1="0" x2="0" y2="1"><stop offset="0" stop-color="#f6953a"/><stop offset="1" stop-color="#c85804"/></linearGradient></defs><rect x="0.5" y="0.5" width="19" height="20" fill="#f0f0f0" stroke="#c8c8c8" stroke-width="1" stroke-dasharray="1 1"/><rect x="3" y="3" width="14" height="15" rx="1" fill="url(#g86)"/><g fill="#ffb56a" opacity="0.5"><circle cx="7" cy="9" r="1"/><circle cx="12" cy="11" r="1"/><circle cx="8" cy="14" r="1"/></g></svg><span class="t" style="left:1030.20px;top:660px;font-size:11px;color:#000;letter-spacing:0.070px;">Водяной знак</span>
</body></html>
